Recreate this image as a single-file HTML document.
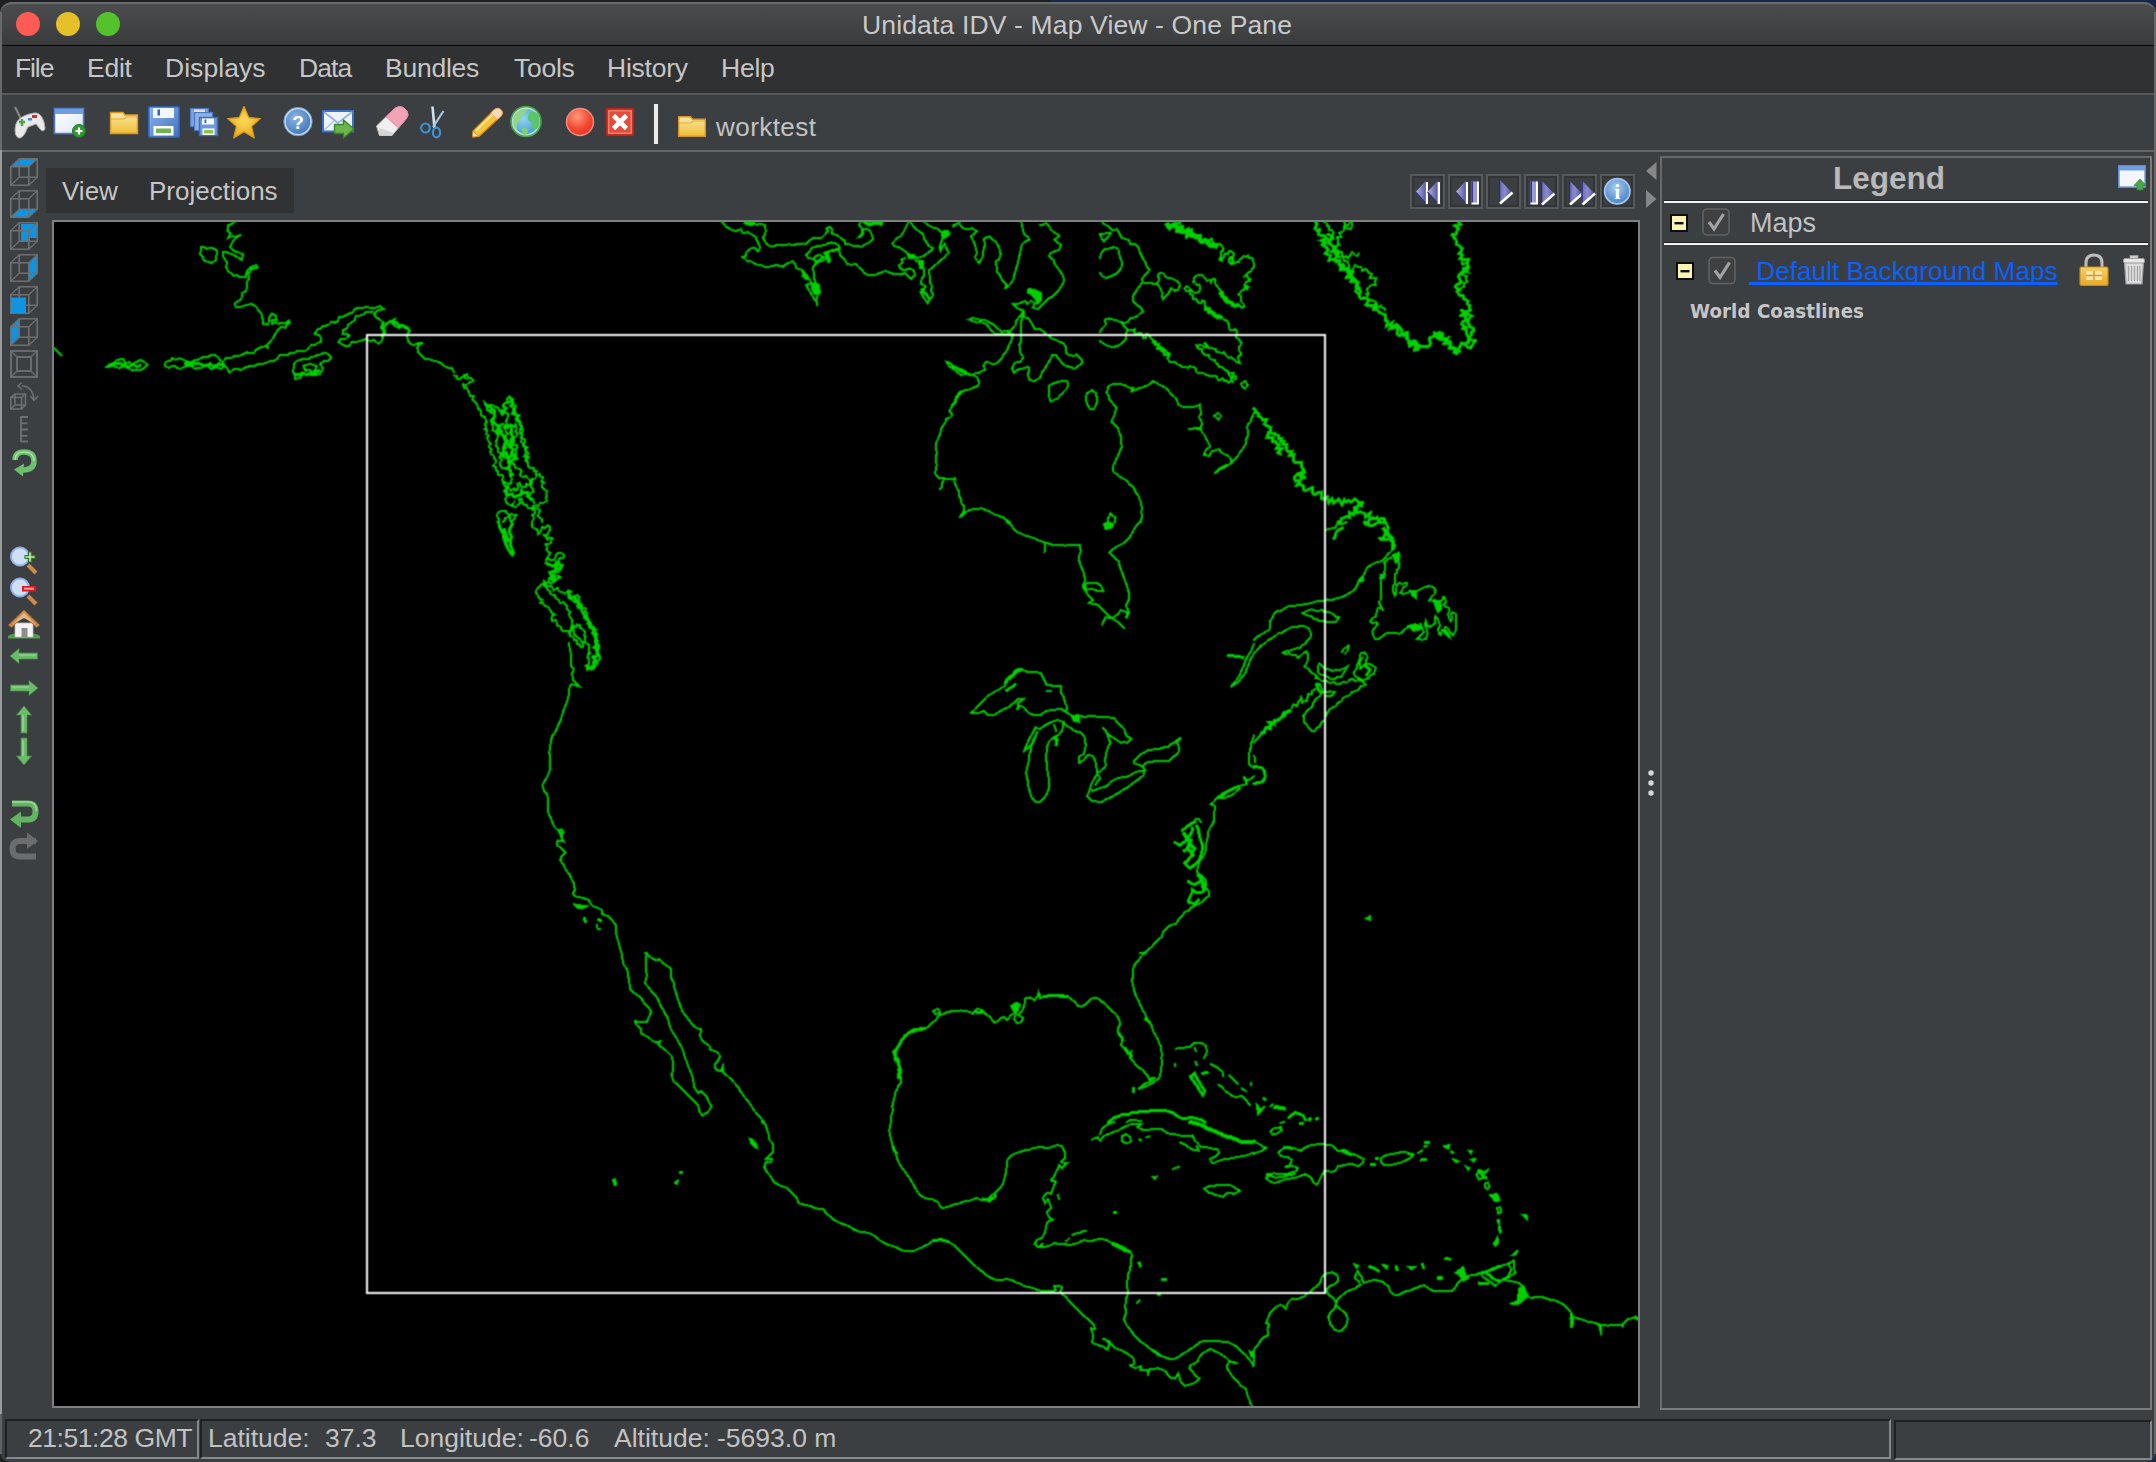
<!DOCTYPE html>
<html lang="en">
<head>
<meta charset="utf-8">
<title>Unidata IDV - Map View - One Pane</title>
<style>
*{box-sizing:border-box;margin:0;padding:0}
html,body{width:2156px;height:1462px;overflow:hidden;background:linear-gradient(90deg,#1f2022 0,#1f2022 1050px,#14284b 1050px,#14284b 100%)}
body{position:relative;font-family:"Liberation Sans",sans-serif;color:#c4c4c4;font-size:26px}
.abs{position:absolute}
.t{position:absolute;white-space:nowrap;line-height:1;transform-origin:0 0}
#win{position:absolute;left:0;top:2px;width:2156px;height:1460px;background:#3c3f41;border-radius:12px 12px 10px 10px}
#titlebar{position:absolute;left:0;top:2px;width:2156px;height:43px;background:linear-gradient(#4b4c4e,#3a3b3d);border-top:2px solid #6b6c6e;border-radius:12px 12px 0 0}
#tbline{position:absolute;left:0;top:45px;width:2156px;height:1px;background:#060607}
#menubar{position:absolute;left:0;top:46px;width:2156px;height:47px;background:#2f3133}
.hl{position:absolute;left:0;width:2156px;height:2px;background:#58595b}
.tl{position:absolute;width:24px;height:24px;border-radius:50%;top:12px}
#lborder{position:absolute;left:0;top:12px;width:2px;height:1442px;background:linear-gradient(#68696b 0,#68696b 138px,#9a9b9c 138px,#9a9b9c 1402px,#606264 1402px,#606264 100%)}
#rborder{position:absolute;left:2154px;top:12px;width:2px;height:1442px;background:#67686a}
.ico{position:absolute;display:block}
svg{overflow:visible}
.m{top:55px;font-size:26.5px;color:#c6c6c6;letter-spacing:-0.25px}

.sb{position:absolute;top:1419px;height:40px;border:2px solid;border-color:#1f2022 #838a8d #838a8d #1f2022}

.st{top:1425px;font-size:26.500px;color:#c2c2c2}
</style>
</head>
<body>
<div id="win"></div>
<div id="titlebar"></div>
<div id="tbline"></div>
<div id="menubar"></div>
<div class="hl" style="top:93px"></div>
<div class="hl" style="top:150px;background:#646668"></div>
<div id="lborder"></div>
<div id="rborder"></div>
<div class="tl" style="left:16px;background:#fe5b54"></div>
<div class="tl" style="left:56px;background:#e6c02a"></div>
<div class="tl" style="left:96px;background:#54c22c"></div>
<div class="t" id="title" style="left:862px;top:12px;font-size:26.5px;letter-spacing:0.15px;color:#c9c9c9">Unidata IDV - Map View - One Pane</div>
<div class="t m" id="m1" style="left:15px;letter-spacing:-1.1px">File</div>
<div class="t m" id="m2" style="left:87px">Edit</div>
<div class="t m" id="m3" style="left:165px;letter-spacing:0.05px">Displays</div>
<div class="t m" id="m4" style="left:299px;letter-spacing:-0.95px">Data</div>
<div class="t m" id="m5" style="left:385px">Bundles</div>
<div class="t m" id="m6" style="left:514px">Tools</div>
<div class="t m" id="m7" style="left:607px">History</div>
<div class="t m" id="m8" style="left:721px">Help</div>
<svg class="ico" style="left:0;top:94px" width="860" height="56" viewBox="0 94 860 56">
<defs>
<linearGradient id="gFold" x1="0" y1="0" x2="0" y2="1"><stop offset="0" stop-color="#fbe9a6"/><stop offset="1" stop-color="#edbd35"/></linearGradient>
<linearGradient id="gBlue" x1="0" y1="0" x2="1" y2="1"><stop offset="0" stop-color="#8fb3e6"/><stop offset="1" stop-color="#3f71c2"/></linearGradient>
<linearGradient id="gWin" x1="0" y1="0" x2="1" y2="1"><stop offset="0" stop-color="#ffffff"/><stop offset="1" stop-color="#dfe6f5"/></linearGradient>
<radialGradient id="gStar" cx="0.5" cy="0.45" r="0.6"><stop offset="0" stop-color="#fbdc5a"/><stop offset="1" stop-color="#e5a315"/></radialGradient>
<radialGradient id="gHelp" cx="0.4" cy="0.35" r="0.7"><stop offset="0" stop-color="#8cb6e2"/><stop offset="1" stop-color="#3f74b8"/></radialGradient>
<radialGradient id="gRed" cx="0.4" cy="0.3" r="0.8"><stop offset="0" stop-color="#ff9a80"/><stop offset="0.6" stop-color="#f4432c"/><stop offset="1" stop-color="#d9382a"/></radialGradient>
<radialGradient id="gGlobe" cx="0.4" cy="0.4" r="0.7"><stop offset="0" stop-color="#8fd6f0"/><stop offset="1" stop-color="#3a8fd0"/></radialGradient>
</defs>
<!-- gamepad -->
<g>
<path d="M15 107 L21 119" stroke="#8a8a8a" stroke-width="2" fill="none"/>
<path d="M16 124 C18 117 28 114 34 113 C40 112 44 118 45 128 C45 131 42 132 40 129 L36 124 L28 127 C26 131 24 137 20 138 C15 138 14 130 16 124 Z" fill="#e9e9e9" stroke="#a9a9a9" stroke-width="1"/>
<path d="M19 122 h6 M22 119 v7" stroke="#4da24a" stroke-width="2.4" fill="none"/>
<rect x="32" y="115" width="5" height="3" fill="#e02b2b"/>
<rect x="28" y="118" width="4" height="2.5" fill="#3c8eea"/>
</g>
<!-- new window -->
<g>
<rect x="54.5" y="108.500" width="29" height="25" fill="url(#gWin)" stroke="#4f80c8" stroke-width="1.6"/>
<rect x="55" y="109" width="28" height="5" fill="#6f9ee0"/>
<circle cx="79" cy="131" r="6.5" fill="#2f9a2f" stroke="#1f7a1f" stroke-width="1"/>
<path d="M75.500 131 h7 M79 127.500 v7" stroke="#fff" stroke-width="2.200"/>
</g>
<!-- folder -->
<g>
<path d="M110.500 133.500 V112.500 H123 L125 115 H137.500 V133.500 Z" fill="url(#gFold)" stroke="#d9962a" stroke-width="1.4"/>
<path d="M111 119 H124 L126 117 H137" stroke="#e5ac3a" stroke-width="1.2" fill="none"/>
</g>
<!-- save -->
<g>
<rect x="148.700" y="106.700" width="30.600" height="30.600" rx="1.500" fill="url(#gBlue)" stroke="#2f62b4" stroke-width="1.6"/>
<rect x="153" y="108" width="21" height="10" fill="#f1f5fc"/>
<rect x="157.500" y="109.500" width="2.500" height="6" fill="#3565b5"/>
<rect x="153.500" y="126" width="20" height="9.500" fill="#fff"/>
<rect x="156" y="128.500" width="15" height="4.500" fill="#6db34f"/>
</g>
<!-- save copies -->
<g>
<rect x="190.500" y="108.500" width="18" height="18" fill="#7fa3da" stroke="#4a78c4" stroke-width="1.2"/>
<rect x="194.500" y="112.500" width="18" height="18" fill="#8fb0e2" stroke="#4a78c4" stroke-width="1.2"/>
<rect x="199.500" y="117.500" width="18" height="18" fill="#6f99dc" stroke="#3a6cc0" stroke-width="1.4"/>
<rect x="194" y="109.500" width="11" height="2.500" fill="#e7ddd0"/>
<rect x="202" y="118.500" width="12" height="6" fill="#f5f8fd"/>
<rect x="204.500" y="119.500" width="1.800" height="3.500" fill="#3565b5"/>
<rect x="202.500" y="128.500" width="12" height="6.500" fill="#fff"/>
<rect x="204" y="130" width="9" height="3.500" fill="#8cc63f"/>
</g>
<!-- star -->
<path d="M244 106.500 L248.800 117.600 L260.300 118.600 L251.600 126.400 L254.300 138 L244 131.800 L233.700 138 L236.400 126.400 L227.700 118.600 L239.200 117.600 Z" fill="url(#gStar)" stroke="#d99a1a" stroke-width="1.2" stroke-linejoin="round"/>
<!-- help -->
<g>
<circle cx="298" cy="121.600" r="13.300" fill="url(#gHelp)" stroke="#c7dcf3" stroke-width="2"/>
<circle cx="298" cy="121.600" r="14.200" fill="none" stroke="#5b8bc8" stroke-width="0.8"/>
<text x="298" y="128.500" font-family="Liberation Sans, sans-serif" font-weight="bold" font-size="19" fill="#ffffff" text-anchor="middle">?</text>
</g>
<!-- mail -->
<g>
<rect x="323" y="111" width="30" height="20.500" fill="#eef3fd" stroke="#3b6fc8" stroke-width="2"/>
<path d="M324 112 L338 123 L352 112" stroke="#8fb0e6" stroke-width="1.600" fill="none"/>
<path d="M324 130 L334 121 M352 130 L342 121" stroke="#a9c1ea" stroke-width="1.200" fill="none"/>
<path d="M334.500 124.500 H343.500 V120 L354 129 L343.500 138 V133.500 H334.500 Z" fill="#6db54a" stroke="#2f8a1f" stroke-width="1.300" stroke-linejoin="round"/>
</g>
<!-- eraser -->
<g>
<path d="M376.500 126 L393 110 Q398.500 104.500 404 108 L407 111 Q409.500 115 406 119 L392 135.500 H379.500 Z" fill="#efefef" stroke="#bdbdbd" stroke-width="1"/>
<path d="M386 116.800 L393 110 Q398.500 104.500 404 108 L407 111 Q409.500 115 406 119 L398.500 127.800 Z" fill="#f2a3b5" stroke="#e58aa0" stroke-width="1"/>
<path d="M379 128 L379.500 135.500 H392 L394 133" fill="#d5d5d5" stroke="none"/>
</g>
<!-- scissors -->
<g fill="none">
<path d="M432.500 106.500 L434.500 128" stroke="#cfe1f3" stroke-width="2.600"/>
<path d="M443.500 111 L433 127" stroke="#a9c9e8" stroke-width="2.200"/>
<ellipse cx="425.500" cy="128" rx="4.300" ry="4.500" stroke="#3d8fd6" stroke-width="2.200"/>
<ellipse cx="436.500" cy="132.500" rx="3.600" ry="4.800" stroke="#3d8fd6" stroke-width="2.200"/>
</g>
<!-- pencil -->
<g>
<path d="M473 131 L494 110 Q498 106.500 501 110 Q504 113 500.500 116.500 L479 136.500 L472.500 137 Z" fill="#f6c33c" stroke="#c98514" stroke-width="1.200" stroke-linejoin="round"/>
<path d="M476 130.500 L495.500 111.500" stroke="#fbe08a" stroke-width="2.400"/>
<path d="M494 110 Q498 106.500 501 110 Q504 113 500.500 116.500 L497 119.500 L491 113 Z" fill="#f7d9b8" stroke="#e2a46a" stroke-width="0.800"/>
<path d="M473 131 L479 136.500 L472.500 137 Z" fill="#f7d9b8" stroke="#c98514" stroke-width="0.800"/>
</g>
<!-- globe -->
<g>
<circle cx="526" cy="121.500" r="15" fill="url(#gGlobe)" stroke="#4aa24a" stroke-width="1.600"/>
<circle cx="526" cy="121.500" r="13.300" fill="none" stroke="#c8ecc0" stroke-width="1.600" opacity="0.85"/>
<path d="M516 113 Q521 108 528 109 Q526 113 522 115 Q523 119 519 121 Q516 124 517 130 Q512 125 513 119 Q514 115 516 113 Z" fill="#8fd68a"/>
<path d="M530 112 Q536 110 539 116 Q541 122 538 128 Q534 131 532 127 Q533 122 529 121 Q526 118 530 112 Z" fill="#5cc46a"/>
<path d="M522 128 Q526 126 528 131 Q527 135 524 135 Q521 132 522 128 Z" fill="#7fd07a"/>
</g>
<!-- record -->
<circle cx="580" cy="122" r="13.500" fill="url(#gRed)" stroke="#ef8d84" stroke-width="1.400"/>
<!-- red x -->
<g>
<rect x="606.800" y="108.800" width="26.400" height="26.400" fill="#e34b3c" stroke="#b8261c" stroke-width="1.800"/>
<rect x="608.800" y="110.800" width="22.400" height="22.400" fill="none" stroke="#f08a7c" stroke-width="1.200"/>
<path d="M613.500 115.500 L626.500 128.500 M626.500 115.500 L613.500 128.500" stroke="#ffffff" stroke-width="4.600"/>
</g>
<!-- separator -->
<rect x="654" y="104" width="4" height="40" fill="#ececec"/>
<!-- folder 2 -->
<g>
<path d="M678.700 136.300 V116.700 H690.500 L692.500 119.200 H705.300 V136.300 Z" fill="url(#gFold)" stroke="#d9962a" stroke-width="1.400"/>
<path d="M679 123 H691 L693 121 H705" stroke="#e5ac3a" stroke-width="1.200" fill="none"/>
</g>
</svg>
<div class="t" id="worktest" style="left:716px;top:114px;font-size:26px;letter-spacing:0.45px;color:#c2c2c2">worktest</div>
<svg class="ico" style="left:0;top:152px" width="52" height="720" viewBox="0 152 52 720">
<defs>
<g id="cube" fill="none" stroke="#6d6f71" stroke-width="1.6">
<path d="M0.800 8.800 H18.800 V27.200 H0.800 Z"/>
<path d="M9.200 0.800 H27.200 V19.200 H9.200 Z"/>
<path stroke-width="1.200" d="M0.800 8.800 L9.200 0.800 M18.800 8.800 L27.200 0.800 M0.800 27.200 L9.200 19.200 M18.800 27.200 L27.200 19.200"/>
</g>
</defs>
<!-- top -->
<g transform="translate(10,158)"><path d="M0.800 8.800 L9.200 0.800 H27.200 L18.800 8.800 Z" fill="#1093e0"/><use href="#cube"/></g>
<!-- bottom -->
<g transform="translate(10,190)"><path d="M0.800 27.200 L9.200 19.200 H27.200 L18.800 27.200 Z" fill="#1093e0"/><use href="#cube"/></g>
<!-- back -->
<g transform="translate(10,222)"><path d="M11 2 H27.200 V16 H20 V19.200 H11 Z" fill="#1093e0"/><use href="#cube"/></g>
<!-- right -->
<g transform="translate(10,254)"><path d="M18.800 8.800 L27.200 0.800 V19.200 L18.800 27.200 Z" fill="#1093e0"/><use href="#cube"/></g>
<!-- front -->
<g transform="translate(10,286)"><use href="#cube"/><path d="M0.800 11.500 H16 V27.200 H0.800 Z" fill="#1093e0"/></g>
<!-- left -->
<g transform="translate(10,318)"><path d="M0.800 8.800 L9.200 0.800 V19.200 L0.800 27.200 Z" fill="#1093e0"/><use href="#cube"/></g>
<!-- square -->
<g transform="translate(10,350)" fill="none" stroke="#6d6f71" stroke-width="1.800"><rect x="1" y="1" width="26" height="26"/><rect x="7" y="7" width="14" height="14"/><path d="M1 1 L7 7 M27 1 L21 7 M1 27 L7 21 M27 27 L21 21" stroke-width="1.300"/></g>
<!-- rotate -->
<g transform="translate(10,382)" fill="none" stroke="#6d6f71" stroke-width="1.600">
<path d="M12 4 Q22 4 24 17"/><path d="M12 0.500 L8 4 L12 7.500" /><path d="M20.500 14 L24 18.500 L28 14"/>
<path d="M0.800 15.500 H11.500 V27 H0.800 Z"/><path d="M5 12 H15.500 V23 H5 Z"/><path d="M0.800 15.500 L5 12 M11.500 15.500 L15.500 12 M0.800 27 L5 23 M11.500 27 L15.500 23"/>
</g>
<!-- ruler -->
<g fill="none" stroke="#6d6f71" stroke-width="1.800"><path d="M21 416 V442 M21 417 H28 M21 423.300 H27.500 M21 429.500 H28 M21 435.800 H27.500 M21 441.500 H28"/></g>
<!-- green loop -->
<g>
<path d="M15 460 Q15 452 24 452 Q34 452 34 461 Q34 470 23 470" fill="none" stroke="#6cbf6c" stroke-width="5.500"/>
<path d="M24 463.500 L14 469.500 L23 476.500 Z" fill="#6cbf6c"/>
<path d="M15 460 Q15 452 24 452 Q34 452 34 461" fill="none" stroke="#a7dca7" stroke-width="1.600"/>
</g>
<!-- zoom in -->
<g>
<path d="M28 565 L36 573" stroke="#c98a4a" stroke-width="4" />
<circle cx="20" cy="556.500" r="9" fill="#cfe0f6" stroke="#8fb2e3" stroke-width="2"/>
<rect x="22" y="548" width="14" height="14" fill="#3c3f41" opacity="0"/>
<path d="M24.500 557 h11 M30 551.500 v11" stroke="#2f7a2f" stroke-width="4.200"/>
<path d="M25.500 557 h9 M30 552.500 v9" stroke="#cfe8b0" stroke-width="1.600"/>
</g>
<!-- zoom out -->
<g>
<path d="M28 596 L36 604" stroke="#c98a4a" stroke-width="4" />
<circle cx="20" cy="587.500" r="9" fill="#cfe0f6" stroke="#8fb2e3" stroke-width="2"/>
<rect x="22" y="586" width="14" height="5.500" fill="#e01820"/>
<rect x="24" y="587.700" width="10" height="2" fill="#f7a0a0"/>
</g>
<!-- home -->
<g>
<path d="M8 636 Q24 628 40 636 L40 638.500 L8 638.500 Z" fill="#4ea04e"/>
<path d="M15 623 H33 V637 H15 Z" fill="#f3f3f3" stroke="#bdbdbd" stroke-width="0.800"/>
<path d="M21.500 628 H27.500 V637 H21.500 Z" fill="#8d8d8d"/>
<path d="M8.500 625 L24 610 L39.500 625 L36.500 627.500 L24 615.500 L11.500 627.500 Z" fill="#c98a4a" stroke="#a96b2f" stroke-width="0.800"/>
<path d="M12 624.500 L24 613 L36 624.500 L24 618 Z" fill="#e3b886"/>
</g>
<!-- arrows -->
<g fill="#6cbb6c" stroke="#3f8f3f" stroke-width="0.800">
<path d="M10 656 L19 648.500 V653 H37.500 V659 H19 V663.500 Z"/>
<path d="M38 688 L29 680.500 V685 H10.500 V691 H29 V695.500 Z"/>
<path d="M24 706 L16.500 715 H21 V733 H27 V715 H31.500 Z"/>
<path d="M24 765 L16.500 756 H21 V738 H27 V756 H31.500 Z"/>
</g>
<g fill="none" stroke="#b5e0b0" stroke-width="1.200" opacity="0.800"><path d="M19 655 H36 M12 687 H29 M23 715 V731 M23 740 V756"/></g>
<!-- undo -->
<g>
<path d="M12 803.500 H28 Q35.500 803.500 35.500 811.500 Q35.500 819.500 28 819.500 H20" fill="none" stroke="#62b362" stroke-width="6"/>
<path d="M21 811.500 L10 819.500 L21 828 Z" fill="#62b362"/>
<path d="M12 802 H28 Q36.500 802 36.500 811" fill="none" stroke="#a5d8a0" stroke-width="1.400"/>
</g>
<!-- redo gray -->
<g>
<path d="M36 841 H20 Q12.500 841 12.500 848.500 Q12.500 856.500 20 856.500 H36" fill="none" stroke="#6a6c6e" stroke-width="6"/>
<path d="M27 832.500 L38 841 L27 849 Z" fill="#6a6c6e"/>
</g>
</svg>
<div class="abs" style="left:46px;top:168px;width:248px;height:45px;background:#303234"></div>
<div class="t" id="vw" style="left:62px;top:178px;font-size:26px;color:#c6c6c6">View</div>
<div class="t" id="pj" style="left:149px;top:178px;font-size:26px;color:#c6c6c6">Projections</div>
<div class="abs" id="mapframe" style="left:52px;top:220px;width:1588px;height:1188px;background:#000;border:2px solid #7d7f80"></div>
<!--MAPSTART-->
<svg class="ico" id="mapsvg" style="left:54px;top:222px;overflow:hidden" width="1584" height="1184" viewBox="54 222 1584 1184" shape-rendering="crispEdges">
<clipPath id="mc"><rect x="54" y="222" width="1584" height="1184"/></clipPath>
<filter id="bl" x="54" y="222" width="1584" height="1184" filterUnits="userSpaceOnUse" color-interpolation-filters="sRGB"><feConvolveMatrix order="3" kernelMatrix="1 2 1 2 4 2 1 2 1" divisor="16" edgeMode="none" preserveAlpha="false"/></filter>
<g clip-path="url(#mc)"><g filter="url(#bl)" fill="none" stroke="#00d000" stroke-linejoin="miter" stroke-linecap="square">
<path stroke-width="2" d="M234.6 222 L231.8 224.1 L228.4 225.1 L227.4 230.2 L230.5 233.3 L228 238 L231.6 236.2 L235.6 236.8 L241.2 234.7 L237.6 236.3 L234.6 238.8 L232.1 242.5 L230.1 247.7 L234.2 251.1 L239.7 252.8 L243.2 254.4 L241.8 260 L237.7 257.3 L232.6 254.4 L227.4 252.4 L223.3 252.4 L222.7 255.9 L225.6 260 L227.3 262.9 L226 266.1 L227.1 268.9 L228.4 271.7 L231.3 273.3 L233.6 275.8 L237.1 275.1 L239.7 277.4 L242.8 277 L245.9 276.6 L246.9 271.3 L251 267.2 L256.2 265.1 L257.6 267.6 L252.1 269.2 L248.2 273.7 L249.4 277.8 L247.3 281.5 L247.4 284.8 L246.9 288.1 L245.4 291.6 L241.8 292.8 L242.5 296.5 L240.4 299.6 L237.6 301.6 L234.6 303.1 L235.8 306.6 L241.8 306.6 L246.9 304.9 L252.1 304.1 L256.2 306.6 L258.4 310.7 L261.3 312.7 L262.5 318.5 L263.3 324 L267.4 324.6 L269.2 321.8 L268.7 318.5 L272 313.5 L275.7 315.6 L276.7 319.7 L271.5 320.5 L272 323.8 L275.3 322.4 L278.7 323.8 L281.8 322.6 L285.1 323.4 L289.2 320.5 L289.6 323 L287 325.1 L285.1 327.9 L281.8 326.7 L278.9 328.7 L276.7 331.6 L274.8 334.9 L273.1 338.2 L270.7 341 L266.6 345.1 L268.7 348.4 L265.3 346.1 L261.3 347.2 L256.2 349.7 L253.9 352.9 L250 353.3 L246.8 352.3 L243.8 353.8 L240.9 355.2 L238 356.4 L234.6 355.8 L230.8 358.2 L226.4 357.9 L222.7 362.0 M222.7 362 L220 360.2 L218.2 357.5 L215 355.1 L211 355 L208.2 356.9 L204.8 356.6 L201.1 358 L197.7 359.9 L194.4 360.5 L191.5 362 L188.3 361.8 L185.3 360.7 L182.3 359.3 L179.2 358.3 L175.6 359.8 L172 358.3 L169.7 361.3 L165.9 361.6 L164.8 365.7 L168.9 368.1 L171.7 366.1 L175.1 366.1 L177.4 368.1 L180.4 368.9 L185.3 366.5 L190.5 365.7 L193.2 367.1 L195.6 368.9 L198.6 367.7 L201.8 367.7 L206.3 364.4 L208.5 366.9 L211.2 368.9 L216.1 367.3 L221.3 368.9 L224.8 365.7 L222.7 362.0 M224.8 365.7 L228.4 370.2 L229.5 372.8 L231.9 370.7 L234.6 368.7 L237.8 368.8 L240.8 370.2 L245.9 367.3 L251 365.7 L255.4 365.7 L259.2 363.6 L263.4 363.7 L267.4 362.4 L270.8 360.7 L274.6 360.7 L277.4 358.3 L279.8 355.4 L283.2 354.8 L286.9 355.4 L290 353.3 L293.6 353.5 L296.7 351.2 L300.3 351.3 L305 351.4 L308.5 348.2 L311 345.4 L314.6 345.1 L317.6 343.2 L320.8 341.9 L321.2 338 L318.8 334.9 L314.6 334.1 L317.5 329.1 L320.7 328.9 L322.8 325.7 L326.1 325.7 L329 324.6 L331.5 321.8 L335.4 322.7 L338.2 320.9 L338.9 316.8 L342.3 317.1 L345.4 315.6 L348.7 313.8 L352.3 312.6 L354.7 309.4 L358.3 307.8 L362.4 308.2 L366 306.6 L369.5 307.7 L373.1 308.2 L376.8 307.4 L380.3 306.1 L383.6 309 L380.6 309.8 L377.4 310.3 L374.2 313.5 L375.3 316.8 L378.3 318.5 L382.4 321.7 L385.2 323.7 L388.5 322.6 L391.6 320.8 L394.7 319.3 L392.6 323.8 L395.4 326.3 L398.8 327.9 L402.7 325.7 L407 326.7 L410.1 330.8 L407.9 333.1 L407 336.1 L408.2 341 L410.4 343.5 L413.2 345.1 L418.5 343.1 L423.4 343.1 L419.2 344.2 L417.3 348 L418.3 352.3 L421.4 355.4 L425.5 359.5 L429.7 359.4 L433.7 360.7 L437.9 361.8 L441.9 363.6 L444.6 366.2 L448 367.7 L452 368.4 L454 371.8 M373.1 311.5 L369.6 312 L366 312.3 L362.9 314.5 L359.5 315.8 L355.7 315.6 L355 319.9 L351.6 322.6 L348.2 324.3 L347 328.5 L343.4 330 L342.4 334.1 L346.1 333.8 L349.5 335.3 L345.4 339 L340.5 339 L338.5 342.3 L342.1 344 L345.4 346.4 L349.3 346.2 L351.7 342.2 L355.7 342.3 L359.1 341 L362.6 340.2 L366 339 L369.9 341 L374.2 340.2 L378.3 343.5 L381.2 342 L382.4 339 L384.4 334.1 L385.2 330.8 L383.4 327.9 L386.9 324.6 M294.1 363.6 L296.6 360.8 L300.3 359.9 L304.3 358.5 L308.5 359.1 L310.8 357 L313.9 356.6 L316.7 355.4 L320.9 354.3 L324.9 352.5 L328.5 354.3 L331.1 357.5 L328.8 360.7 L324.9 360.7 L320 363.6 L322.9 368.1 L321.7 371.1 L320 373.9 L316.4 375 L312.6 375.1 L309.6 374.3 L306.4 373.9 L302.5 374.6 L300.3 378 L295.1 378.8 L294.8 375.1 L293.1 371.8 L293.7 367.7 L294.1 363.6 M303.4 365.7 L307.1 365 L310.5 363.6 L313.4 365.2 L316.7 365.7 L316 369.6 L312.6 371.8 L309.2 369.9 L305.4 370.8 L303.4 365.7 M200.7 246.6 L203.9 247.3 L206.9 248.7 L210 248.1 L213.1 248.3 L216.2 249.6 L217.2 252.8 L216.2 256.3 L216.1 260 L212 263 L206.9 261.4 L203.7 260.2 L202.8 256.9 L200.3 254.3 L200.7 250.7 L200.7 246.6 M106.3 367.3 L109.4 364.3 L113.5 363.2 L116 360.5 L119.4 359.5 L122.8 358.5 L125.8 363.6 L129 362.2 L132 364 L137.1 361.6 L140.8 360 L144.3 362 L147.4 364.6 L143.3 368.7 L139.8 370.3 L136.1 369.4 L132.9 370.6 L129.9 368.9 L126.6 367.7 L123.8 365.7 L119.9 368 L115.6 366.9 L112.4 365.7 L109.4 366.8 L106.3 367.3 M54 348.2 L58.1 352.3 L61.8 355.4 M454 375.5 L456.7 375.6 L457.3 379.3 L460.2 379 L462.4 376.8 L465.3 378 L464.1 374.9 L467.3 374.3 L467.8 377.9 L471.4 378 L473.5 381.1 L470.9 381.9 L468.4 383.1 L466.2 385.4 L463.2 384.1 L463.5 386.2 L464.3 388.2 L467.5 387.7 L467.6 391.1 L469.4 392.3 L469.7 396.2 L473.5 396.4 L472.4 399.1 L473.9 400.9 L475.5 402.6 L477.4 404.3 L477.6 406.5 L477.6 408.8 L480.5 409.8 L480.7 412.9 L481.7 415.9 L484.8 417 L485.7 419.6 L486.8 422.1 L484.8 424.1 L486.3 427.1 L484.8 429.3 L487.4 430.5 L486.2 434.3 L488.9 435.4 L487 438.1 L488.1 440 L488.9 442 L490.9 443.7 L489 445.5 L489.2 447.6 L491.6 450 L489.9 451.9 L491.2 454 L493.3 455.5 L494 458 L496.2 460.4 L495.9 462.4 L494.4 464.3 L493 466.2 L495.6 467.1 L495.7 470.4 L498.1 471.4 L498.2 474.7 L501.7 474.6 L503.3 476.5 L502.2 479.6 L503 481.7 L506.3 482.6 L503.5 484.1 L506 486.9 L506.2 489.2 L504.3 490.9 L505.9 492.7 L506.4 494.8 L506.6 496.8 L505.3 499.1 L506.3 502 L508.4 504.2 L511.4 505.7 L513.5 503.2 L513 506 L515.6 507.3 L516.7 505.6 L518.7 504.5 L520.5 503.3 L518.8 499.4 L521.7 499.1 L522.4 501.1 L522.7 503.5 L524.4 504.6 L526.9 505.2 L527.8 507.6 L530.3 507.9 L532 509.3 L532.9 506.1 L536.1 505.2 L538.6 506 L539.9 503 L542.3 503.2 L544.8 502.3 L546.8 501 L545.7 497.5 L547.4 496 L545.9 494.4 L547.3 491.2 L545.3 490 L543.3 488.8 L541.9 486.5 L542 484.4 L544.3 482.6 L541.4 481.6 L543.3 477.4 L540.2 476.5 L539.7 474 L535.9 475.3 L536.7 471.3 L534 471.4 L533.9 468 L531.1 468 L528.9 467.3 L527.6 465.1 L528.1 462.6 L525.5 460.7 L526.9 458 L524 456.4 L528.6 453.5 L526.6 451.7 L525.6 449.8 L527.4 447.4 L524.8 445.7 L523.9 443.8 L525.4 441 L524.6 439.1 L520.9 437.9 L521.7 435.4 L520.3 433.3 L520.3 431.1 L519.9 428.9 L521.5 426.5 L519.6 424.4 L520.7 422.1 L519.3 420.5 L517 419.3 L519.5 415.5 L515.9 415.1 L515.6 412.9 L514.7 410.9 L514.8 408.6 L515.7 406.1 L512.7 404.8 L512.5 402.6 L513.4 399.6 L510.4 398.5 L509.4 396.4 L508 398 L506.9 399.7 L507.7 402.9 L504.7 403.2 L503.3 404.7 L504.7 406.9 L505.4 409 L501.1 410.7 L504.1 413 L502.2 414.9 L500.6 412.4 L499.2 409.8 L497.8 407.3 L495 406.7 L492.6 405.4 L489.9 404.7 L487 404.5 L484.8 402.6 L485.7 405.2 L486.8 407.7 L488.1 410 L489.9 411.8 M486.8 407.7 L487.1 410.3 L491.1 409.5 L490.7 412.6 L493.3 413 L494.5 414.7 L495 417 L493.2 418.7 L494.2 421.1 L493.5 423.1 L492.1 424.9 L493 427.2 L492.5 430.4 L495.8 431.2 L496.3 433.7 L498.1 435.4 L497.7 437.5 L497.2 439.5 L495.9 441.4 L496.7 443.7 L496.1 445.7 L497.2 447.5 L498.6 448.9 L497.9 452 L500.2 452.9 L502.2 453.9 L499.9 455.6 L499.2 457.6 L502.2 460.3 L500.3 462.1 L500.2 464.2 L501 467.5 L503.3 468.4 L506.3 468.3 L509 469.5 L510.1 471.5 L509.7 474.3 L510.4 476.5 L512.2 479 L510.9 480.9 L511.4 483.1 L507.9 484.5 L508.4 486.8 L509.5 489.1 L511 490.6 L514.7 488.3 L515.6 490.9 L517.6 489.3 L518.4 487.1 L517 483.9 L519.7 482.6 L520.6 485.7 L522.4 487.4 L525.8 486.8 L526.3 484.2 L530.6 485.3 L530.1 481.8 L532 480.6 L532.3 482.6 L530 485 L531 487 L533 488.8 L533.6 491.6 L531.3 493.1 L529.9 494.9 L528.9 497 L530.8 498 L532.7 499.1 L533.5 501 L534 503.2 M503.3 404.7 L502.7 407 L506.8 408.1 L504.7 410.9 L505.9 412.8 L508.6 414.2 L507.6 416.7 L507.4 419 L506.3 421 L506.5 423.1 L508.4 425.6 L503.2 426.7 L505.3 429.3 L506.1 432 L507.3 434.2 L512 432.3 L512.5 435.4 L513 437.8 L513.6 440.2 L509.3 441.2 L511.2 444 L509.4 445.7 L512.2 446.2 L512.2 448.7 L511.4 451.9 L513 453.3 L515.6 453.9 L516 456.6 L515.8 459.1 L511.2 460.2 L512.5 463.1 L513.9 465.1 L515.2 467.3 L517.6 468.3 L520.6 469.4 L521.7 471.4 L519.8 474.9 L521.7 476.5 L523.9 476.8 L526.5 475.7 L527.9 478.5 L530.2 480.5 L532.1 478.7 L534.2 479.3 L536.1 477.5 M509.4 397.5 L512.1 398.8 L508.8 401.9 L513.3 402.7 L509.8 405.8 L512.4 407.2 L513.6 409 L513.1 411.3 L511.8 413.8 L515.6 414.8 L516.9 416.5 L515.6 419 L516.8 420.8 L519.4 421.6 L519.7 424.2 L522 426.1 L522 428.3 L522.9 430.4 L522.4 432.7 L522.1 435 L522.4 437.2 L521.7 439.5 L520.8 441.9 L523.7 443.4 L523 445.7 L525.1 447.4 L524.7 449.6 L526.8 451.3 L524.8 453.9 L526.8 455.5 L528.7 457.1 L526 460.5 L527.9 462.1 M498.1 429.3 L500 427.8 L500.4 424.7 L503.3 424.2 L505.4 425.1 L506.3 428.2 L509.4 427.2 L510.5 424.4 L514.3 426.7 L515.6 424.2 L516.4 426.4 L516.6 428.8 L515.4 431.5 L517.6 433.4 L516.7 435.8 L514.9 437.5 L513.5 439.5 L513.7 442 L513.3 444.8 L517.3 445.3 L517.6 447.8 L515.5 449.5 L515.7 451.7 L515.7 453.8 L516.5 456.1 L515.6 458 L513 456.5 L511.5 453.9 L510.7 457.2 L508.4 458.3 L505.3 458 L502.6 456.5 L505.5 453.6 L502.5 452.2 L503.3 449.8 L503.2 446.8 L504.2 444.5 L507.4 443.7 L507.5 440.6 L506.2 438.5 L503.3 437.5 L502.7 435 L499.7 434 L498.3 432 L498.1 429.3 M498.1 522.1 L499.5 520.1 L497.6 517.5 L497 515.2 L497.9 513.2 L500.2 511.4 L502.8 511.4 L505.5 510.8 L507.4 513.4 L509.2 515.4 L511.4 514.1 L513.5 514.7 L515.5 514.9 L517.6 514.5 L515.5 515.6 L514.9 517.9 L513.5 519.6 L510.6 521.4 L509.9 516.8 L507.4 517.5 L505 518.2 L504.6 520.5 L503.3 522.1 M532 522.1 L532.9 520 L534.3 518 L532.2 514.8 L535.1 513.4 L535.1 510.8 L533 509.3 L534.8 507.6 L537.1 508.3 L539.8 510.1 L539.3 512.7 L537.5 515.5 L539.2 517.5 L542 518.9 L542.3 522.1 M953.5 225.1 L958.7 223 L961.4 226.4 L964.8 229.2 L968.5 229.5 L972 228.2 L977.1 231.2 L974.1 233.8 L971 236.4 L972.5 239 L973.8 241.8 L975.1 244.6 L975.8 248.8 L977.1 252.8 L975.1 256.9 L976.7 260.2 L979.2 263 L980.7 260.4 L982.2 257.7 L983.3 254.8 L983.2 251.3 L984 247.9 L985.3 244.6 L984.4 241.6 L984.3 238.4 L989.5 236.4 L992.3 239.3 L995.6 241.5 L998.7 246.6 L1000.1 250.6 L1000.7 254.8 L998.7 260 L995.6 261 L995.8 264.4 L997.2 267.7 L996.6 271.3 L999 273.6 L1000.4 276.5 L1001.8 279.5 L1004.1 282.2 L1006.9 284.6 L1004.8 288.7 L1008.1 286.4 L1011 283.6 L1012.8 280.6 L1014.1 277.4 L1014.7 273.2 L1016.1 269.2 L1017.2 265.1 L1018.2 261 L1019.2 256.9 L1020.2 252.8 L1020.7 249.7 L1021.3 246.6 L1022.8 243.6 L1025.4 241.5 L1029.5 239.4 L1027.4 236.4 L1024.3 234.3 L1022.8 230.3 L1022.3 226.1 L1021.3 222.0 M1039.7 225.1 L1043.1 224.9 L1045.9 223 L1049 226.1 L1050.9 229.7 L1054.1 232.3 L1059.2 235.3 L1057.2 238.1 L1054.1 239.4 L1057.2 242.5 L1061.3 244.6 L1059.2 249.7 L1055.2 251.3 L1051 252.8 L1049 255.9 L1051.2 258.4 L1054.1 260 L1054.3 263.3 L1056.2 266.1 L1058.3 268.6 L1060.3 271.3 L1063.3 276.4 L1063.8 280 L1063.3 283.6 L1060.3 287.7 L1058.6 290.6 L1056.2 292.8 L1052.1 296.9 L1048.5 298.3 L1045.9 301 L1041.8 305.1 L1037.7 309.2 L1032.6 307.2 L1035.6 303.1 L1030.5 301 L1027.4 304.1 L1025.4 301 L1020.2 303.1 L1016.7 304.1 L1013.1 304.1 L1017.2 308.2 L1020.2 309.4 L1023.3 310.3 L1022.2 313.3 L1019.9 315.7 L1018.2 318.5 L1016.1 320.8 L1016 324.2 L1014.1 326.7 L1010 330.8 L1005.8 330.7 L1001.8 331.8 L998.7 329.2 L995.6 326.7 L992.9 324 L989.5 322.6 L986.5 320.7 L983.3 319.5 L979.1 319.5 L975.1 318.5 L971.9 318.3 L968.9 319.5 L973 321 L977.1 322.6 L981.4 322.2 L985.3 323.6 L988.6 326.1 L990.5 329.7 L993.1 331.8 L995.6 333.9 L999.7 333.8 L1003.8 333.9 L1006.9 333.5 L1010 333.2 L1013.1 333.9 L1012 339 L1010.7 342.2 L1009 345.1 L1007.7 348.9 L1005.9 352.3 L1003.3 355.1 L1001.8 358.5 L997.7 362.6 L994.7 364 L991.5 363.6 L986.4 361.6 L983.3 365.7 L985.3 369.8 L982.1 370.9 L979.2 372.8 L975.4 373.3 L972 374.9 L968.6 374 L965.9 371.8 L962.6 369.6 L958.7 368.7 L955.8 366.9 L952.5 365.7 L949.8 363 L946.4 361.6 L949.4 366.7 L953.2 368.9 L956.6 371.8 L960.7 374.9 L964.8 374.2 L968.9 373.9 L973.1 375.2 L977.1 377 L979.2 382.1 L978.2 386.2 L974.2 386.9 L971 389.3 L967.9 389.6 L964.8 390.3 L960.7 392.3 L958.9 395.6 L956.6 398.5 L954.7 401.7 L952.5 404.7 L951.3 407.9 L949.4 410.8 L952.5 414.9 L949.9 417.6 L946.4 419 L945.5 422.4 L943.3 425.2 L941.2 429.1 L940.2 433.4 L939 437.1 L937.1 440.6 L935.8 444.1 L936.1 447.8 L936.5 451.2 L936.5 454.6 L936.1 458 L936.1 461.4 L936.7 464.9 L936.1 468.3 L935.1 473.4 L938.1 477.5 L941.3 477.8 L944.3 478.5 L947.7 479.4 L951.1 479.2 L954.6 478.5 L954.5 481.7 L955.6 484.7 L956.9 487.9 L958.7 490.9 L959 495.1 L960.7 499.1 L961.5 503 L963.8 506.2 L963.8 511.4 L961.7 514.4 L959.7 517.5 L963 515.3 L965.9 512.4 L969.1 510.1 L973 509.3 L977.2 509.2 L981.2 508.3 L985.4 509.8 L989.5 511.4 L992 513.2 L994.8 514.3 L997.7 515.5 L1000.6 516.5 L1003.5 517.5 L1005.9 519.6 L1010 522.1 M944.3 478.5 L942.5 482.5 L942.3 486.8 L940.2 488.8 M1023.3 310.3 L1024.5 313.7 L1024.3 317.4 L1028.4 318.5 L1030.5 321.5 L1032.6 324.6 L1034.6 328.7 L1039.7 328.7 L1043 331.1 L1045.9 333.9 L1048.7 335.6 L1051 338 L1056.2 340 L1059.6 341.9 L1063.3 343.1 L1066.4 348.2 L1066.1 351.4 L1067.4 354.4 L1070.7 355 L1073.6 356.4 L1076.7 354.4 L1079 357.1 L1081.8 359.5 L1082.8 362.6 L1078.7 365.7 L1074.6 368.7 L1069.5 366.7 L1066.3 366 L1063.3 364.6 L1061.4 362 L1059.2 359.5 L1056.2 355.4 L1052.1 355.4 L1050.7 358.6 L1049 361.6 L1045.9 366.7 L1044.3 369.6 L1041.8 371.8 L1041.3 375.1 L1039.7 378 L1034.6 381.1 L1029.5 380 L1028.4 376.5 L1028.4 372.8 L1029.2 369.8 L1028.4 366.7 L1025.4 367.7 L1022.3 368.7 L1017.2 369.8 L1014.1 372.8 L1012 368.7 L1014.1 363.6 L1017 362.1 L1020.2 361.6 L1023.3 357.5 L1020.2 352.3 L1020.4 348.6 L1019.2 345.1 L1021.1 341.3 L1021.3 336.9 L1021.2 333.9 L1020.6 330.8 L1020.7 327.7 L1021.3 324.6 L1021.1 321.4 L1022.3 318.5 L1022.5 314.3 L1023.3 310.3 M1049 386.2 L1051.7 384 L1055.1 383.1 L1059.1 381.6 L1063.3 381.1 L1067.4 381.1 L1067.9 384.6 L1067.4 388.2 L1064.8 390.7 L1062.3 393.4 L1059.7 395.5 L1058.2 398.5 L1054.4 399.6 L1051 401.6 L1049 396.4 L1048.8 393 L1048.8 389.6 L1049 386.2 M1086.9 393.4 L1092.1 390.3 L1096.2 393.4 L1096.6 397.5 L1097.2 401.6 L1095.9 405.3 L1094.1 408.8 L1090 408.8 L1086.9 403.6 L1086.1 400.6 L1085.9 397.5 L1086.9 393.4 M1108.5 386.2 L1112.4 384.4 L1116.7 384.1 L1120.9 384.3 L1124.9 385.2 L1128.7 387.5 L1133.1 388.2 L1131.1 392.3 L1133.5 390.4 L1136.5 389.6 L1139.3 388.2 L1142.4 387.4 L1145.4 386.2 L1149.4 384.2 L1152.6 381.1 L1156.5 382.7 L1159.8 385.2 L1163.1 386.3 L1166 388.2 L1168.9 391 L1171.1 394.4 L1173.8 396.3 L1176.2 398.5 L1177.3 401.5 L1178.3 404.7 L1182.2 406.5 L1186.5 406.7 L1190.6 407.3 L1194.7 406.7 L1199.8 404.7 L1199.7 407.8 L1200.8 410.8 L1200.6 414.2 L1198.8 417 L1201.1 420.2 L1201.9 424.2 L1200.8 428.3 L1197.7 428.1 L1194.6 428.1 L1191.6 429.1 L1188.5 429.3 L1191.6 429.3 L1194.7 428.2 L1197.8 428.8 L1200.8 428.9 L1202.2 432.6 L1204.9 435.4 L1206 438.8 L1208 441.6 L1210.1 446.7 L1206 449.8 L1203.9 454.9 L1209.1 456 L1212.1 450.8 L1215.9 450.4 L1219.3 448.8 L1220.7 451.9 L1223.4 453.9 L1226.7 455 L1229.6 457 L1231.3 459.8 L1231.6 463.1 L1228.7 464.8 L1225.5 465.2 L1221.9 467.2 L1218.3 469.3 L1214.2 473.4 L1218 471.1 L1221.4 468.3 L1224.5 467.6 L1227 465.9 L1229.6 464.2 L1232.8 461.3 L1235.7 458 L1238.2 455.6 L1239.8 452.5 L1241.9 449.8 L1244 446.8 L1246 443.7 L1246.2 439.3 L1248 435.4 L1248 431.3 L1247 427.2 L1248 424.3 L1250.4 422.1 L1251.1 419 L1252.8 416.1 L1254 412.9 M1108.5 386.2 L1107.8 389.4 L1106.4 392.3 L1108.6 395.7 L1109.5 399.5 L1111.9 401.8 L1113.6 404.7 L1116.7 407.7 L1115.4 411.3 L1114.6 414.9 L1112.8 418.4 L1111.6 422.1 L1115.7 425.2 L1117.8 427.9 L1118.8 431.3 L1120.5 435.3 L1120.8 439.5 L1121.3 443.1 L1121.8 446.7 L1120.2 450.3 L1118.8 453.9 L1117.4 457.1 L1115.7 460.1 L1114.6 463.4 L1112.6 466.2 L1112.9 469.3 L1113.6 472.4 L1116.7 473.7 L1118.8 476.5 L1121.6 477.5 L1124.3 479.2 L1127 480.6 L1129.5 484.3 L1133.1 486.8 L1134.6 489.6 L1136 492.6 L1138.2 495 L1139.3 498.4 L1140.8 501.7 L1141.3 505.2 L1142.1 508.6 L1141.2 512.1 L1142.4 515.5 L1141.5 518.7 L1141.3 522.1 M1214.2 415.9 L1218.3 412.9 L1221.4 415.9 L1218.3 419.4 L1214.2 415.9 M1240.9 384.1 L1245 381.1 L1248 385.2 L1245 388.6 L1242.7 386.6 L1240.9 384.1 M1107.5 522.1 L1107.7 518.9 L1109.5 516.3 L1110.5 513.4 L1112.9 515.7 L1115.7 517.5 L1114.6 522.1 M1323.8 222 L1326.5 222.6 L1326.7 225.6 L1329.4 226.3 L1329.1 229.8 L1332 230.2 L1333.7 232.7 L1333 234.7 L1332.6 236.7 L1332.8 238.9 L1329.9 240.5 L1328.5 243.8 L1331.5 244.8 L1334.1 246.1 L1334 248.7 L1336.1 249.3 L1335.2 254 L1338.9 252.4 L1341.8 252.1 L1342.3 254.8 L1344.3 257.1 L1346.4 255.9 L1348.4 258.4 L1350.5 254.8 L1352.2 251.7 L1354.5 254.1 L1356.9 256.3 L1358.7 253.8 M1344.3 222 L1345.8 224.9 L1347.7 225.9 L1351.3 220.3 L1352.5 224.1 L1351.8 226.5 L1350.9 228.7 L1348.9 229.5 L1343.9 226.3 L1344.3 230.2 L1342.6 232 L1339.2 232.7 L1341.4 236.8 L1337.1 237.1 L1338.1 240.5 L1338.2 242.6 L1339.2 244.9 L1335.1 246.3 L1333.6 248.2 L1339.2 251.2 L1336.1 252.8 L1337.2 254.9 L1338.8 256.7 L1342.5 256.3 L1343.3 258.7 L1344.3 261 L1347.7 261.7 L1348.6 264 L1349.5 266.2 L1348.6 269.6 L1350.5 271.3 L1353 271.2 L1353.6 267.3 L1355 265 L1358.7 267.2 L1361.4 267.3 L1362.1 270.7 L1366 268.9 L1367.6 270.9 L1368.9 273.3 L1371.9 273.7 L1369.7 277.9 L1372.3 278.4 L1376.4 278 L1375.1 281.5 L1375.6 285.1 L1372.5 285.1 L1370.2 285.9 L1368.9 287.7 L1366.7 289.2 L1368.6 293.4 L1364.8 293.8 L1368.2 294.5 L1366.4 298.7 L1368.9 300 L1371.3 300.4 L1373.7 300.6 L1375.7 301.8 L1377.1 304.1 L1376.8 307.9 L1381.2 305.5 L1381.8 308.2 L1384.3 308.2 L1385.3 310.3 M1459.2 258.9 L1462 258.7 L1461.5 262.7 L1462.4 264.9 L1467.8 261.2 L1467.4 265.1 L1466.2 267 L1464.1 268.5 L1468.1 272.5 L1461.9 272.4 L1463.3 275.4 L1467 275.9 L1465.5 279.9 L1467.4 281.5 L1465.6 282.8 L1463.7 283.9 L1463.8 287.1 L1461.3 287.7 M532 522 L532.6 524.1 L531.6 526.7 L534 528.2 L536.9 529.2 L537.9 531.5 L538.1 534.3 L540.3 532.7 L541.2 530.2 L542.3 527.1 L545.3 528.2 L547.4 525.3 L550.5 527.1 L550.1 530 L548.4 532.3 L547.5 535.3 L544.3 535.3 L546.4 537 L547.4 539.4 L549.7 537.6 L552.5 538.4 L551.1 540.8 L550.5 543.5 L547.8 543.6 L545.3 544.6 L547.2 546.9 L546.4 549.7 L548.1 551.7 L550.5 552.8 L549 555.4 L547.4 557.9 L545.3 561 L547.6 558.8 L550.5 560 L554.1 560.2 L555.6 556.9 L556.5 554.6 L558 552.8 L560.7 552.8 L563.8 554.8 L563.5 557.9 L559.9 557.8 L558.7 560 L558.6 562.8 L560.3 564.2 L562.8 565.1 L561.6 567.9 L559.7 570.2 L557.6 572.3 L554.6 572.3 L553.9 575.7 L550.5 575.4 L552.5 576.1 L554.6 575.7 L556.6 575.4 L559 575.7 L560.7 577.4 L557.8 578.4 L555.6 580.5 L553.2 582.3 L550.5 583.6 L548.4 581.5 L546.4 583.6 L544.3 581.5 L544.9 584.2 L547.4 585.6 L550.4 585.5 L552.5 587.7 L553.7 590.4 L557.6 587.8 L558.7 590.8 L560.7 591.9 L563 592.4 L564.8 593.8 L566.5 592 L568.3 590.5 L571 591.8 L569 593.4 L571.8 596.6 L568.9 597.9 L571.4 599.7 L574.1 601 L577 599.9 L574.6 596.1 L577.1 594.9 L579.5 596.9 L579.2 600 L578 601.9 L577.8 604.1 L577.1 606.1 L579.8 606.3 L582.3 605.1 L582 607.8 L585.7 608.5 L585.3 611.3 L587.2 613.5 L587.4 616.4 L587.2 618.9 L585.3 620.5 L588.7 619.5 L590.5 622.6 L590.5 625.7 L593.6 626.7 L594.1 629.2 L596.6 629.7 L595 631.5 L597.5 634.6 L594.6 635.9 L594.7 639.3 L597.7 641 L596.8 643.3 L598.5 645.1 L598.7 647.2 L596.9 648.9 L597.5 651.4 L596.6 653.3 L599.1 654 L599.7 656.4 L599.8 659.3 L598 660.7 L595.6 661.6 L597.8 663.6 L595.6 665.7 L594.1 668.3 L591.5 669.8 L589.5 668.6 L587.4 669.8 L587.2 667.3 L585.3 665.7 L588.6 664.8 L589.5 661.6 L589.3 659.1 L587.4 657.5 L588 654.7 L590.5 653.3 M544.3 583.6 L541.3 584.4 L539.2 586.6 L537.2 588.4 L536.1 590.8 L536.4 593.6 L538.1 595.9 L539.5 598.6 L542.3 600 L540.2 603.1 L543 602.5 L544.1 605.4 L546.4 606.1 L548.8 607.8 L550.5 610.3 L551.6 613.2 L554.6 614.4 L552 615.6 L551.5 618.5 L552.2 621.1 L556 619.8 L556.6 622.6 L557.6 625.7 L560.7 626.7 L561.4 629.3 L563 630.8 L565.9 630.8 L568.4 631.5 L569.5 633.5 L570 635.9 L573.1 636.9 L574.1 640 L576.9 639.9 L576.6 643.8 L579.2 644.1 L580.5 646.7 L583.3 647.2 L583.1 645 L583.2 642.7 L581.2 641 L579.6 638.6 L577.1 636.9 L575.4 635.3 L573.7 633.5 L574.1 630.8 L572 629.1 L573 626.7 L570.8 628.2 L571.3 631.4 L568.9 632.8 L569.7 630.8 L571.3 629.6 L571.3 627 L574.1 626.7 L572.4 625 L571.7 622.9 L572.6 620.2 L571 618.5 L569.7 616.6 L568.8 614.6 L570.4 611.7 L567.9 610.3 L566.9 608.2 L567.1 605.5 L564.8 604.1 L563 602.3 L559.7 602.9 L558.7 600 L556.9 599 L555.4 597.6 L554.8 595.3 L552.5 594.9 L550.4 593.6 L549.7 590.9 L547.4 589.7 L546.5 587.6 L544.3 586.1 L544.3 583.6 M574.1 627.7 L576.4 626.9 L577.1 624.6 L579.6 625 L580 628.1 L582.3 628.7 L583.9 630.5 L585.1 632.4 L584.3 634.9 L585.7 636.7 L584.6 639.2 L584.5 641.4 L586.4 643.1 L588.7 644.5 L588.5 647.2 L589.5 649.2 L589 651.3 L588.4 653.3 M568.9 643.1 L569.2 646.2 L570 649.2 L570.8 653.3 L571 657.5 L571 661.6 L571 665.7 L574.1 668.7 L572 673.9 L572.7 676.9 L573 680 L575.9 683.3 L579.2 686.2 L575.5 685.4 L572 684.1 L570 686.2 L569 690.2 L568.9 694.4 L568.1 697.9 L567.2 701.3 L565.9 704.7 L564.1 708.7 L562.8 712.9 L561.7 715.9 L561.1 719.1 L559.7 722.1 L558 725.6 L556.6 729.3 L554.9 732.6 L552.5 735.4 L551.2 739.5 L550.5 743.7 L549.8 747.7 L549.4 751.9 L549.7 756 L550.5 760.1 L550.3 764.2 L550.5 768.3 L549.1 772.4 L547.4 776.5 L544.3 781.6 L542.3 785.7 L544.3 790.9 L547.4 795 L547.8 799.1 L548 803.2 L548.1 807.3 L548 811.4 L548.9 814.6 L550.5 817.5 L552.5 822.1 M1006.9 522 L1009.7 523.7 L1012 526.1 L1014.3 529.4 L1017.2 532.3 L1020.9 533.4 L1024.3 535.3 L1027.8 536.1 L1031.3 537.2 L1034.6 538.4 L1037.9 540.2 L1041.4 541.2 L1044.9 542.5 L1049 543.6 L1053.1 545 L1056.1 545.5 L1059.2 545 L1062.3 545.4 L1065.4 545.6 L1068.5 545.3 L1071.6 545.2 L1074.6 544.6 L1079.8 544.6 L1080 547.7 L1080.8 550.7 L1079.6 554.8 L1078.7 558.9 L1079.9 562.5 L1080.8 566.1 L1082.5 569.6 L1083.9 573.3 L1084.7 577.4 L1084.9 581.5 L1082.8 585.6 L1084.1 588.9 L1085.9 591.8 L1087.8 594.4 L1090 596.9 L1093.1 600 L1089 603.1 L1092.5 603.8 L1096.2 604.1 L1099.5 606.4 L1102.3 609.2 L1105.5 612.3 L1108.5 615.4 L1112.6 618.5 L1109 617.7 L1105.4 617.4 L1103.8 621 L1102.3 624.6 M1044.9 543.5 L1045 547.7 L1044.5 551.8 M1112.6 618.5 L1115.7 620.5 L1118.8 622.6 L1121 625.4 L1123.9 627.7 M1112.6 618.5 L1115 616.2 L1117.7 614.4 L1120.8 610.3 L1124 611 L1127 612.3 L1126.6 615.4 L1125.9 618.5 L1127.7 615.5 L1129 612.3 L1127.8 609.1 L1125.9 606.1 L1127.2 602.9 L1129 600 L1128.7 596.4 L1129 592.8 L1127.7 589.3 L1127 585.6 L1125.3 581.6 L1123.9 577.4 L1122.4 573.3 L1120.8 569.2 L1119.4 565.2 L1118.8 561 L1116.1 559.1 L1113.6 556.9 L1109.5 552.8 L1113.6 548.7 L1117.1 546.4 L1120.8 544.6 L1124.1 542.9 L1127 540.5 L1129.7 537 L1132.1 533.3 L1133.8 529.5 L1136.2 526.1 L1140.3 522.0 M1083.9 584.6 L1089 582.5 L1092.6 583 L1096.2 582.5 L1099 584.3 L1101.3 586.6 L1103.4 590.8 L1100.3 590.9 L1097.2 590.8 L1092.1 588.7 L1086.9 589.7 L1083.9 584.6 M971 712.9 L974.1 710.5 L976.7 707.6 L979.2 704.7 L981.7 702.5 L983.8 700 L985.9 697.5 L988.4 695.4 L991.6 693.8 L994.4 691.7 L997.7 690.3 L1001.1 688 L1004.8 686.2 L1005.2 683.1 L1005.9 680 L1008.7 677.1 L1012 674.9 L1014 672.3 L1016.1 669.8 L1021.3 668.7 L1024.2 670.5 L1027.4 671.8 L1031 672.2 L1034.6 672.2 L1037.7 672.5 L1040.8 672.8 L1042.2 676 L1043.8 679 L1045.4 682.1 L1046.9 685.2 L1050.6 685.3 L1054.1 686.2 L1057.7 686.3 L1061.3 686.2 L1061.2 689.3 L1060.9 692.3 L1062.4 695 L1064.4 697.5 L1064.5 700.6 L1065.4 703.6 L1067.4 707.7 L1065.4 711.8 L1061.3 708.8 L1057.7 709.3 L1054.1 709.8 L1050.5 710.2 L1046.9 710.8 L1043.7 712.7 L1040.8 714.9 L1037.2 715 L1033.6 714.9 L1028.4 712.9 L1026.2 710.5 L1024.3 707.7 L1020.2 705.7 L1017.2 709.8 L1017.9 706.2 L1018.2 702.6 L1021.5 700.9 L1024.3 698.5 L1019.2 698.5 L1016.5 700.3 L1014.1 702.6 L1010.9 705 L1007.9 707.7 L1004.2 709 L1000.7 710.8 L997.6 712.7 L994.6 714.9 L991 714.8 L987.4 714.9 L984.3 710.8 L979.2 712.9 L975.1 712.9 L971 712.9 M1046.9 690.7 L1051 690.7 M1063.3 722.1 L1060.3 720.9 L1057.2 720.1 L1054.1 721 L1051 722.1 L1048.1 723.9 L1044.9 725.2 L1042.3 727.3 L1039.7 729.3 L1035.6 727.2 L1034.1 730.3 L1032.6 733.4 L1030.4 736.9 L1028.4 740.6 L1027 744.2 L1025.4 747.8 L1024.3 750.8 L1027.5 748.4 L1030.5 745.7 L1032.3 743.2 L1033 740.1 L1034.6 737.5 L1036.3 734.5 L1037.7 731.3 L1036.1 734.3 L1035.2 737.5 L1033.8 740.6 L1032.6 743.7 L1031.1 746.9 L1030.9 750.6 L1029.5 753.9 L1029 757.3 L1028.9 760.8 L1028 764.2 L1027.2 767.6 L1026.5 770.9 L1026.4 774.4 L1026.9 777.5 L1027.8 780.5 L1027.9 783.7 L1028.4 786.8 L1029.4 790.2 L1030.3 793.7 L1031.5 797 L1033.6 799.6 L1035.6 802.1 L1039.7 802.1 L1042.4 799.7 L1044.9 797 L1046.5 794.4 L1047.6 791.5 L1049 788.8 L1048.9 785.4 L1049.4 782 L1049 778.5 L1048 775.2 L1047.8 771.7 L1046.9 768.3 L1046.5 764.9 L1046.5 761.4 L1045.9 758 L1045.9 754.6 L1047.1 751.2 L1046.9 747.8 L1047.8 744.6 L1049 741.6 L1051.3 739.2 L1054.1 737.5 L1059.2 734.4 L1062.3 730.3 L1063.3 725.2 L1063.3 722.1 M1054.1 725.2 L1055.3 728.2 L1056.2 731.3 M1067.4 712.9 L1070.6 714.8 L1073.6 717 L1077.7 715.9 L1080.9 716 L1083.9 717 L1086.9 716.5 L1090 716.2 L1093.1 715.9 L1096.2 716.5 L1099.3 716.5 L1102.3 717 L1105.4 717 L1108.5 717.2 L1111.5 718 L1114.6 718 L1116.3 721.3 L1118.8 724.2 L1121.3 726.2 L1123.9 728.3 L1125.2 731.8 L1125.9 735.4 L1131.1 738.5 L1127 742.6 L1123.9 742.3 L1120.8 742.6 L1117.7 740.7 L1114.6 738.5 L1109.5 735.4 L1107.2 733.1 L1105.4 730.3 L1102.3 727.2 L1105.2 730.6 L1107.5 734.4 L1108.7 738.6 L1110.5 742.6 L1108.7 745.6 L1107.5 748.8 L1106.6 751.8 L1106.1 754.9 L1105.4 758 L1105.3 761.1 L1105.7 764.2 L1105.4 767.3 L1102.6 768.9 L1100.3 771.4 L1097.2 772.4 L1096.5 768.3 L1096.2 764.2 L1094.8 760 L1093.1 756 L1088 754.9 L1085.7 757.3 L1083.9 760.1 L1078.7 763.1 L1079 760.1 L1078.7 757 L1083.9 753.9 L1084.9 749.8 L1085.9 745.7 L1085.2 741.6 L1084.9 737.5 L1082.9 734.9 L1080.8 732.4 L1077.1 731.7 L1073.6 730.3 L1070.7 728 L1067.4 726.2 L1063.3 722.1 M1097.2 773.4 L1095.3 777.1 L1093.1 780.6 L1091.2 784.6 L1090 788.8 L1088.7 792.5 L1086.9 796 L1089.6 798.5 L1092.1 801.1 L1095.2 801.2 L1098.2 801.7 L1101.3 802.1 L1103.9 800.5 L1106.6 799 L1109.5 798 L1112.7 796.5 L1115.6 794.4 L1118.8 792.9 L1121.4 791 L1124.1 789.3 L1127 787.8 L1129.7 785.7 L1132.4 783.6 L1135.2 781.6 L1138 779.7 L1140.7 777.6 L1143.4 775.5 L1144.4 770.3 L1141.3 771 L1138.2 771.4 L1135.3 772.3 L1132.6 773.8 L1130 775.5 L1127.1 776.6 L1123.8 776.5 L1120.8 777.5 L1116.6 778.7 L1112.6 780.6 L1110 782.4 L1108 785 L1105.4 786.8 L1101.7 787.5 L1098.2 788.8 L1093.1 790.9 L1090 788.8 M1097.2 773.4 L1100.3 778.5 L1097.6 781.5 L1095.1 784.7 M1134.1 761.1 L1136.2 758.4 L1138.6 756 L1141.3 753.9 L1145.1 752.3 L1148.5 749.8 L1152.3 749.6 L1156 748.9 L1159.8 748.8 L1163.8 747.4 L1168 746.7 L1170.9 744.4 L1174.2 742.6 L1177.6 739.8 L1181.3 737.5 L1179.1 739.9 L1177.2 742.6 L1179.3 747.8 L1178.3 752.9 L1175.8 755.1 L1173.1 757 L1169 761.1 L1165.6 761.4 L1162.2 760.7 L1158.8 761.1 L1155 761.1 L1151.3 762.1 L1147.5 762.1 L1144.7 763.9 L1142.4 766.2 L1138.3 764.6 L1134.1 763.1 L1134.1 761.1 M1142.4 766.2 L1145.4 770.3 M1254 644.1 L1252.3 647.6 L1251.1 651.3 L1248.9 654.3 L1247 657.5 L1245.1 661.4 L1243.9 665.7 L1242.3 668.6 L1240.9 671.7 L1239.8 674.9 L1237.5 678.7 L1234.7 682.1 L1232.5 684.5 L1230.6 687.2 L1234.2 684.7 L1237.8 682.1 L1240 679.8 L1241.8 677.3 L1243.9 674.9 L1245.7 672 L1246.7 668.8 L1248 665.7 L1249.4 662 L1251.1 658.5 L1254 653.3 M1254 735.4 L1252.6 739.5 L1251.1 743.7 L1250.9 747.2 L1249.8 750.5 L1249.1 753.9 L1249.4 757.3 L1249.1 760.8 L1249.1 764.2 L1251.5 766.2 L1254 768.3 M1254 776.5 L1251 778.5 L1248 780.6 L1243.9 776.5 L1245.1 780.2 L1247 783.7 L1243.6 785.2 L1239.8 785.7 L1235.6 786.9 L1231.6 788.8 L1228.9 790.2 L1226.1 791.5 L1223.4 792.9 L1220.9 794.8 L1218.4 796.8 L1216.2 799.1 L1213.8 801.7 L1211.1 804.2 L1215.2 806.2 L1214.9 809.3 L1214.1 812.4 L1214.2 815.5 L1214.1 818.8 L1213.2 822.1 M1219.3 798 L1222 796.4 L1224.5 794.6 L1226.7 792.3 L1229.6 790.9 L1232.4 789.6 L1235.1 788.3 L1237.8 786.8 L1239.8 788.8 L1236.5 791 L1233.7 793.9 L1231 795.5 L1228 796.2 L1225.5 798 L1222.4 798 L1219.3 798.0 M1194.7 819.6 L1198.8 818.6 L1200.8 822.1 M1324.8 530.2 L1328.4 529.1 L1332 528.2 L1335.3 527.9 L1336.8 524.2 L1340.2 524.1 L1343.5 523.6 L1346.4 522.0 M1393.6 548.7 L1390.6 551.9 L1387.4 554.8 L1385 558.1 L1382.3 561 L1377.1 562 L1374 563.4 L1371 565.1 L1367.7 567 L1365.9 570.2 L1364.3 574.1 L1361.7 577.4 L1358.8 580.5 L1357.6 584.6 L1355.8 587.8 L1353.5 590.8 L1349.9 592.8 L1346.4 594.9 L1342.5 597 L1338.1 597.9 L1334.5 599.1 L1331 600.4 L1327.7 599.3 L1324.8 601 L1321.7 600.8 L1318.6 600.6 L1315.6 601.6 L1312.2 602.8 L1308.8 603.5 L1305.3 603.7 L1302 605 L1298.4 604.8 L1295 605.7 L1291.5 606.2 L1288 606.5 L1284.8 608.2 L1281.2 611 L1276.6 611.3 L1274 614 L1272.5 617.4 L1270.3 620.7 L1270.4 624.6 L1269.4 629.7 L1265.7 631.7 L1262.2 633.9 L1257.1 636.9 L1254 640.0 M1302.2 613.3 L1307.4 610.7 L1311.5 609.3 L1315.6 610.7 L1318.8 610.6 L1322 610.3 L1324.8 612.3 L1329.1 612.2 L1333 613.9 L1335.5 616.8 L1339.2 617.4 L1336.1 621.5 L1332 621.5 L1327.9 622.2 L1323.8 621.4 L1319.7 621.5 L1317 619.2 L1313.5 618.5 L1311 615.8 L1307.4 615.4 L1302.2 613.3 M1254 653.3 L1256.3 651.2 L1258.4 648.8 L1260.2 646.2 L1263.1 644.4 L1266 642.5 L1268.4 640 L1271.3 638.5 L1274.1 637 L1276.6 634.9 L1278.9 632.7 L1282.3 632.6 L1284.8 630.8 L1288.3 628.8 L1292 627.1 L1295.6 627.5 L1299.2 626.3 L1302.9 625.5 L1306.3 627.1 L1309.1 628.8 L1310.4 631.8 L1311.3 635.6 L1309.4 639 L1306.7 641 L1305.3 644.1 L1302 645.2 L1300.2 648.2 L1297 648.3 L1294 649.2 L1290.5 650.4 L1286.8 650.9 L1282.7 652.9 L1285.7 654.1 L1288.9 653.3 L1292.2 655.2 L1296.1 655.4 L1298.1 657.9 L1300.8 655.7 L1303.3 653.3 L1306.3 651.3 L1307.8 654.2 L1307.8 657.5 L1307.6 660.7 L1306.3 663.6 L1304.3 666.7 L1308.4 668.7 L1311.5 672.8 L1315.6 674.9 L1317.6 678.0 M1319.7 663.6 L1322.4 666 L1324.8 668.7 L1328.5 669.2 L1332 670.8 L1336.1 670.1 L1340.2 669.8 L1344 668.6 L1347.4 666.7 L1344.3 671.8 L1341.2 677 L1337.7 676.7 L1335.1 679 L1331.1 679.3 L1327.9 677 L1324.9 675.7 L1321.7 674.9 L1318.6 673.2 L1317.6 669.8 L1317.6 666.3 L1319.7 663.6 M1360.7 653.3 L1364.8 652.3 L1367.9 657.5 L1366 660.2 L1365.9 663.6 L1371 664.6 L1376.1 667.7 L1374.9 670.7 L1374.1 673.9 L1370.7 674.9 L1368.9 678 L1365.9 679.2 L1362.8 680 L1358.7 678 L1354.6 675.9 L1354.2 671.9 L1356.6 668.7 L1357.3 665.1 L1358.7 661.6 L1360 657.5 L1360.7 653.3 M1362.8 657.5 L1360.7 660.2 L1359.8 663.3 L1360.5 666.7 L1359.7 669.8 L1362.8 665.7 L1365.9 663.6 M1342.3 652.3 L1343.4 649 L1346.4 647.2 L1349.4 645.1 L1347.7 647.7 L1347.5 651 L1345.3 653.3 M1315.6 678 L1319.1 678.6 L1321.7 681.1 L1326.2 680.7 L1329.9 683.1 L1333.5 682 L1336.7 684.3 L1340.2 684.1 L1342.8 681.7 L1346.9 682.7 L1349.4 680 L1352.5 678.8 L1355.6 681.1 L1358.7 680 L1362.9 681.7 L1365.9 685.2 L1360.7 686.2 L1358.6 689.9 L1354.6 691.3 L1351.5 692.5 L1349.5 695.4 L1346.4 696.4 L1343.2 697.9 L1341.4 701.3 L1338.1 702.6 L1335.9 706.2 L1332 707.7 L1328.8 710.3 L1326.9 713.9 L1325.2 716.8 L1324.8 720.1 L1321.4 722.4 L1319.7 726.2 L1316.6 728.3 L1314.5 731.3 L1310.8 730.3 L1308.4 727.2 L1306.6 724.4 L1304.3 722.1 L1304.4 718.9 L1303.3 715.9 L1305.7 712.8 L1308.4 709.8 L1312 707 L1313.5 702.6 L1316.1 699 L1319.7 696.4 L1322.1 692.7 L1321.7 688.2 L1319.7 684.1 M1323.8 692.3 L1327 692.5 L1329.9 691.3 L1335.1 692.3 L1332.6 695.1 L1329.5 696.4 L1325.8 696.4 M1317.6 684.1 L1317.8 687.2 L1315.6 688.7 L1313.5 690.3 L1311.5 691.2 L1312.1 694.3 L1308.4 693.9 L1308.4 696.4 L1306.9 698 L1306.7 700.9 L1304.2 701.5 L1302.2 702.6 L1302 700 L1301.2 697.5 L1300.4 699.6 L1298.5 701.2 L1298.1 703.6 L1296.8 706.1 L1293.4 704.5 L1292 706.7 L1291.5 709.5 L1289.9 711.8 L1287.8 712.7 L1286.1 714.1 L1284.8 715.9 L1282.9 717.3 L1280.9 718.4 L1278.6 719 L1276.3 719.9 L1274.4 721.2 L1274.5 724.2 L1272.9 722.3 L1270.5 722.5 L1268.4 722.1 L1270.7 724.2 L1271.4 727.2 L1270.6 729.9 L1266.8 727.5 L1265.6 729.5 L1264.3 731.3 L1261.2 732.4 L1260.2 735.4 L1258.6 738 L1256.1 739.5 L1254 742.6 M1254 756 L1255.2 758.9 L1255 762.1 M552.1 822 L554.6 827.1 L558.7 831.2 L561.7 829.2 L563.8 832.3 L560.7 836.4 L563.8 841.5 L560.7 841.1 L557.6 840.5 L556.6 844.6 L560.7 847.7 L563.2 850.1 L565.9 852.4 L561.7 855.9 L560.3 860 L561.8 862.7 L563.8 865.1 L565 868.4 L566.9 871.3 L569.3 874.1 L571 877.4 L572.2 880.6 L574.1 883.6 L574.3 886.7 L575.1 889.7 L572.6 893.8 L575.1 896.3 L578.1 897.3 L581.2 897.5 L584.8 898.6 L588.4 899.6 L590.2 902.2 L591.5 905.1 L594.4 906.8 L597.7 907.8 L601.8 909.8 L602.2 913.9 L604.9 915.3 L607.9 916 L612 920.1 L615.7 924.6 L615.7 928.7 L616.1 932.8 L616.8 937 L618.2 941 L619.4 945.1 L620.2 949.2 L621.7 953.2 L622.3 957.5 L622.8 960.5 L623.3 963.6 L624.8 966.3 L626.8 968.7 L627.9 972.3 L628.4 975.9 L628.7 980.1 L629.5 984.1 L629.5 988.2 L631.7 991.1 L634.6 993.4 L639.7 996.4 L642 999.4 L643.8 1002.6 L647.9 1006.7 L649.6 1009.3 L651.4 1011.8 L649 1017 L646.9 1022.1 L643.8 1021.9 L640.8 1022.1 L635 1021.1 L636.7 1025.2 L640.8 1028.3 L641.2 1033.4 L644.1 1034.9 L646.9 1036.5 L649.7 1038.3 L652.1 1040.6 L656.2 1042.6 L660.3 1041.2 L658.2 1044.7 L662.3 1047.8 L665 1049.6 L667.4 1051.9 L671.5 1056 L672.1 1059.1 L673.2 1062.1 L672.9 1066.2 L673.2 1070.3 L671.5 1074.4 L672.6 1078 L673.6 1081.6 L676.4 1083.4 L678.7 1085.7 L681.1 1088.5 L683.9 1090.9 L686.2 1093.6 L689 1096 L691.7 1098.4 L694.1 1101.1 L698.2 1105.2 L698.7 1108.3 L699.3 1111.4 L702.3 1115.5 L707.5 1112.4 L709.8 1109.5 L711.6 1106.2 L708.5 1101.1 L707.3 1097.9 L705.4 1095 L701.3 1090.9 L698.2 1092.9 L696.2 1089.8 L694.1 1086.8 L693.6 1082.6 L693.1 1078.5 L691.6 1074.4 L690 1070.3 L688.2 1066.3 L686.9 1062.1 L685.6 1059.1 L684.6 1056.1 L683.9 1052.9 L682.5 1049.2 L680.8 1045.7 L678.6 1042.2 L676.7 1038.5 L674.7 1035.4 L672.6 1032.4 L670.9 1028.8 L669.5 1025.2 L668.5 1021.1 L667.4 1017 L665.1 1013.6 L663.3 1009.8 L660.9 1006.4 L659.2 1002.6 L658.1 999.3 L656.2 996.4 L654 994.1 L651.8 991.9 L650 989.3 L647.5 986.1 L644.9 983.1 L646.2 979.1 L646.9 974.9 L646.1 970.8 L645.9 966.7 L646 963.1 L645.9 959.5 L646.3 956.4 L646.9 953.3 L644.5 952.3 L647.7 954.9 L651 957.5 L656.2 960.5 L659.2 959.1 L661.6 961 L663.3 963.6 L668.5 966.7 L671.1 968.7 L671.3 971.9 L670.5 974.9 L671.6 978.7 L673.6 982.1 L674.1 986.3 L675.2 990.3 L676.5 994.4 L677.7 998.5 L678.7 1001.6 L680 1004.6 L680.8 1007.7 L682.6 1011.5 L684.9 1014.9 L687.5 1018 L690 1021.1 L692.2 1024.4 L695.1 1027.2 L698.1 1028.5 L701.3 1029.3 L700.5 1032.8 L700.3 1036.5 L701.9 1039.8 L704.4 1042.6 L709.5 1045.7 L710.5 1049.8 L713.7 1050.6 L716.7 1051.9 L720.4 1056 L717.7 1061.1 L714.6 1064.2 L715.7 1069.3 L720.8 1071.4 L722.9 1066.2 L723.3 1069.3 L722.9 1072.4 L726.1 1074.7 L729 1077.5 L731.8 1079.9 L734.1 1082.6 L736.5 1085.1 L738.6 1087.8 L740.3 1090.9 L742.3 1093.6 L744.1 1096.6 L746.5 1099.1 L749.1 1102.6 L751.6 1106.2 L753.3 1109.3 L755.4 1112 L757.7 1114.5 L760.1 1116.7 L761.8 1119.6 L763.9 1122.1 M596.6 924.6 L597.7 928.7 L599.7 928.7 M890.9 1122.1 L890.9 1117.7 L892 1113.4 L893 1110.1 L892.3 1106.6 L893 1103.2 L893.8 1099.8 L894.6 1096.4 L895 1092.9 L897.2 1089.6 L898.1 1085.7 L901.2 1082.6 L900.9 1078.5 L900.2 1074.4 L898.1 1078.5 L898.2 1075.5 L898.6 1072.4 L898.4 1069.3 L899.2 1066.2 L899.3 1062 L898.1 1058 L895 1060.1 L894.7 1055.8 L893 1051.9 L895.3 1049.5 L898.1 1047.8 L900.2 1042.6 L903.3 1037.5 L905.4 1034.9 L908.4 1033.4 L910.7 1031.1 L913.5 1029.3 L916.6 1029.3 L919.7 1029.7 L922.9 1029.5 L925.8 1028.3 L929.3 1026.1 L932 1023.1 L935.4 1020.4 L938.1 1017 L939.2 1012.9 L935.1 1013.9 L933 1010.8 L938.1 1008.8 L939.8 1011.6 L940.2 1014.9 L943.4 1014.1 L946.4 1012.5 L949.5 1011.9 L952.5 1010.8 L956.6 1010.8 L960.7 1010.4 L963.7 1011.5 L966.9 1011.2 L970.2 1012 L973 1013.9 L974.7 1011.2 L977.1 1009.2 L982.3 1009.8 L985.3 1013.9 L990.5 1017 L992.2 1020.1 L994.6 1022.7 L997.5 1021.4 L999.7 1019 L1003.8 1016.6 L1006.9 1020.1 L1009.1 1017.6 L1011 1014.9 L1016.1 1012.5 L1015.4 1015.8 L1014.1 1019 L1017.2 1023.1 L1021.3 1022.1 L1023.3 1018 L1018.2 1014.9 L1022.3 1010.8 L1023.4 1007.8 L1024.3 1004.7 L1025.2 1001.6 L1025.4 998.5 L1030.5 997.5 L1034.6 1000.1 L1037.7 996.4 L1038.7 992.3 L1039.8 995.3 L1039.7 998.5 L1044.9 996.4 L1047.9 995.7 L1051 995.4 L1055.1 995.1 L1059.2 995.4 L1063.4 995.4 L1067.4 996.4 L1070 998.3 L1072.6 1000.1 L1075.5 1002.6 L1077.7 1005.7 L1081.8 1006.7 L1086.9 1003.6 L1089.2 1000.8 L1092.1 998.5 L1095.1 998 L1098.2 998.5 L1100.6 1000.7 L1103.4 1002.6 L1106.4 1004.7 L1108.5 1007.7 L1111.4 1010.5 L1114.6 1012.9 L1117.1 1015.7 L1118.8 1019 L1119.9 1022 L1119.8 1025.2 L1118.2 1028.1 L1117.7 1031.3 L1120.8 1035.4 L1122.9 1039.5 L1120.8 1044.7 L1123.2 1047 L1124.9 1049.8 L1128 1053.9 L1131.1 1051.9 L1130 1054.8 L1130 1058 L1134.1 1062.1 L1135.8 1065 L1138.2 1067.3 L1143.4 1070.3 L1145 1073.2 L1147.5 1075.5 L1149.5 1079.6 L1152.5 1078.1 L1155.7 1077.5 L1153 1079.3 L1150.5 1081.4 L1147.5 1082.6 L1144.1 1084.2 L1141.3 1086.8 L1138.2 1088.8 L1141.5 1088.2 L1144.5 1086.9 L1147.5 1085.7 L1150.5 1084.1 L1153.6 1082.6 L1156.1 1080.4 L1158.8 1078.5 L1160.2 1075.1 L1160.8 1071.4 L1161.1 1068.3 L1161.7 1065.2 L1161.9 1062.1 L1161.4 1058 L1161.9 1053.9 L1161 1049.9 L1160.8 1045.7 L1158.9 1043.2 L1158.4 1040.1 L1156.7 1037.5 L1155.4 1034.7 L1153.5 1032.2 L1152.6 1029.3 L1151.6 1025.5 L1149.5 1022.1 L1147.2 1018.7 L1145.4 1014.9 L1144 1012.2 L1142.3 1009.7 L1141.3 1006.7 L1139.7 1004.1 L1139 1001 L1137.2 998.5 L1136 995.5 L1134.7 992.5 L1134.1 989.3 L1133.4 986.2 L1132.5 983.2 L1132.1 980 L1133.2 976 L1133.1 971.8 L1133.6 967.6 L1135.2 963.6 L1138.3 961 L1140.3 957.5 L1142.5 954.9 L1145.4 953.3 L1142.4 952.8 L1139.3 953.3 L1142.4 953.1 L1145.4 952.3 L1148.3 949.4 L1151.6 947.2 L1154.1 944.1 L1156.7 941 L1159.1 938.7 L1161.9 936.9 L1162.6 933.7 L1163.9 930.8 L1168 926.7 L1172 924.7 L1176.2 923.6 L1178.1 920.4 L1180.3 917.4 L1182.9 915.3 L1184.4 912.3 L1187.9 910.8 L1190.6 908.2 L1195.7 905.1 L1199.6 903.6 L1202.9 901 L1205.6 898 L1209.1 895.9 L1209.1 891.8 L1206 887.7 L1205.7 884.6 L1206 881.5 L1204.4 878.1 L1201.9 875.4 L1198.9 873.8 L1196.7 871.3 L1198.1 867.2 L1198.8 863 L1200.6 859.8 L1202.9 856.9 L1205.1 853 L1206 848.7 L1205.8 844.5 L1207 840.5 L1207.9 836.4 L1208 832.3 L1209.4 829.1 L1211.1 826.1 L1214.2 822.0 M1176.2 1048.8 L1179.2 1047.6 L1182.4 1047.8 L1186.5 1047.3 L1190.6 1046.7 L1194.7 1042.6 L1197.8 1042.6 L1200.8 1042.6 L1206 1045.7 L1206.5 1048.8 L1207 1051.9 L1205.9 1055.2 L1203.9 1058.0 M1194.7 1047.8 L1195.7 1050.8 M1211.1 1064.2 L1214.1 1066 L1217.3 1067.3 L1219.6 1069.7 L1222.4 1071.4 L1223.4 1076.5 M1195.7 1062.1 L1196.7 1065.2 M1229.6 1075.5 L1233.7 1079.6 L1237.8 1083.7 M1218.3 1084.7 L1221.2 1086.3 L1223.4 1088.8 L1226.2 1091.8 L1229.6 1093.9 L1232.4 1096 L1235.7 1097 L1238.8 1096.5 L1241.9 1096 L1246 1100.1 L1248 1102.7 L1250.1 1105.2 M1241.9 1088.8 L1246 1090.9 M1251.1 1082.6 L1251.1 1084.7 M1175.2 1064.2 L1175.2 1066.2 M1127 1122.1 L1129.8 1120.3 L1133.1 1119.6 L1137.2 1120.6 L1141.3 1120.6 M1270.4 1106.2 L1272.5 1104.2 M761.9 1122 L766 1125.1 L766.8 1128.7 L768 1132.3 L768.9 1135.8 L769 1139.4 L771.3 1141.8 L773.1 1144.6 L773.1 1148.2 L773.1 1151.8 L769 1155.9 L766 1158.9 L769 1158.9 L772.1 1158.9 L771.1 1162 L766 1162 L764.3 1167.2 L767 1172.3 L769.2 1174.7 L771.1 1177.4 L774.2 1182.5 L777.4 1183.8 L780.3 1185.6 L783.4 1186.6 L786.5 1187.7 L789.2 1190 L791.6 1192.8 L794.1 1195.4 L796.7 1197.9 L798.8 1203.1 L802.8 1204.4 L807 1205.1 L811.2 1206.4 L815.2 1208.2 L819.3 1208.8 L823.4 1209.2 L825.3 1211.9 L827.5 1214.4 L830.8 1216.7 L833.7 1219.5 L836.3 1221.1 L839 1222.5 L841.9 1223.6 L846 1225 L850.1 1226.7 L854 1229.7 M890.9 1122 L890.2 1126.1 L889.3 1130.2 L889.7 1134.4 L890.9 1138.4 L891.9 1142.5 L893 1146.6 L894.6 1149.7 L896.1 1152.8 L896.6 1157 L898.1 1161 L899.9 1164.8 L902.2 1168.2 L905 1171.7 L907.4 1175.4 L909.7 1178.3 L911.5 1181.5 L913.7 1185 L915.6 1188.7 L917.7 1191.7 L919.7 1194.9 L924.8 1197.9 L928.3 1199 L932 1199 L934.9 1200.8 L938.1 1202 L939.8 1205.4 L942.3 1208.2 L946.4 1207.2 L950.6 1206 L954.6 1204.1 L958.8 1203.5 L962.8 1202 L965.8 1201 L968.9 1201 L973 1199.5 L977.1 1197.9 L980 1199.5 L983.3 1200 L986.5 1199.5 L989.5 1197.9 L992.3 1195.1 L995.6 1192.8 L998.1 1190.2 L1000.7 1187.7 L1002.4 1184.7 L1003.8 1181.5 L1004.7 1177.4 L1005.9 1173.3 L1006.4 1169.2 L1006.9 1165.1 L1006.9 1161.9 L1007.9 1158.9 L1012 1154.8 L1016.1 1153.2 L1020.2 1151.8 L1023.3 1151.1 L1026.3 1149.8 L1029.5 1149.7 L1032.4 1148.3 L1035.8 1148.2 L1038.7 1146.6 L1042.1 1147.3 L1045.5 1147.8 L1049 1147.7 L1053.1 1146.5 L1057.2 1145 L1062.3 1146.2 L1063.5 1149.7 L1065.4 1152.8 L1065 1157.9 L1061.3 1162 L1064.3 1163 L1067.4 1163 L1064.6 1165.3 L1062.3 1168.2 L1059.2 1165.1 L1058.2 1168.4 L1056.2 1171.3 L1054.1 1176.4 L1051 1180.5 L1056.2 1181.5 L1054.5 1184.5 L1053.1 1187.7 L1052.3 1190.8 L1051 1193.8 L1046.9 1192.8 L1044.7 1195.2 L1042.8 1197.9 L1044.9 1203.1 L1047.9 1199 L1050 1204.1 L1051 1208.2 L1046.9 1212.3 L1049 1217.4 L1053.1 1219.5 L1047.9 1221.5 L1045.9 1226.7 L1045.6 1229.8 L1044.9 1232.8 L1041.8 1238 L1036.7 1240 L1034.6 1244.1 L1038.7 1247.2 L1042.8 1243.1 L1040.8 1247.2 L1044.4 1246.7 L1047.9 1246.2 L1051.3 1245.1 L1054.1 1243.1 L1057.7 1243.7 L1061.3 1244.1 L1065.4 1244.3 L1069.5 1245.1 L1073.6 1244.1 L1077.7 1243.1 L1080.7 1241.5 L1083.9 1240 L1087.9 1241.1 L1092.1 1241 L1095.6 1239.8 L1099.3 1239 L1102.9 1239.3 L1106.4 1240 L1109.4 1241.7 L1112.6 1243.1 L1115.8 1243.7 L1118.8 1245.1 L1121.8 1246.8 L1124.9 1248.2 L1130 1251.3 L1132.1 1255.4 L1131 1259.4 L1131.1 1263.6 L1130.5 1266.7 L1130 1269.8 L1128 1274.9 L1127.9 1278 L1127.3 1281.1 L1127 1284.1 L1127.4 1288.2 L1128 1292.3 L1127.4 1295.6 L1125.9 1298.5 L1125.9 1302.7 L1124.9 1306.7 L1125.9 1309.7 L1125.9 1312.9 L1125.1 1316 L1123.9 1319 L1125.9 1324.2 L1128.1 1326.7 L1130 1329.3 L1132.3 1332.2 L1134.1 1335.4 L1137.4 1338.3 L1140.3 1341.6 L1144.2 1343.8 L1147.5 1346.7 L1150.5 1348.8 L1153.6 1350.8 L1156.2 1352.9 L1159 1354.4 L1161.9 1356 L1165.9 1357.6 L1170.1 1359 L1173.7 1358.7 L1177.2 1358 L1180.6 1355.2 L1184.4 1352.9 L1187.3 1351.4 L1189.9 1349.4 L1192.6 1347.8 L1195.4 1345.8 L1198.2 1343.8 L1200.8 1341.6 L1204.3 1341.2 L1207.7 1340.7 L1211.1 1340.6 L1214.6 1340.6 L1218 1340.9 L1221.4 1341.6 L1225.5 1342.1 L1229.6 1342.6 L1233.2 1344.6 L1236.8 1346.7 L1239.8 1349.9 L1242.9 1352.9 L1245.9 1355 L1248 1358 L1250.2 1360.3 L1251.7 1363.1 L1254 1365.2 M1066.4 1241 L1069.5 1238.0 M1072.6 1234.9 L1076.1 1233.5 L1079.8 1232.8 L1082.7 1231.3 L1085.9 1230.8 M854 1228.7 L856.9 1230.7 L860.2 1231.8 L863.8 1232.2 L867.3 1232.8 L871.1 1233.9 L874.5 1235.9 L877.7 1238.4 L880.7 1241 L883.4 1242.3 L886 1244 L888.9 1245.1 L892.1 1245.7 L895.2 1246.9 L898.1 1248.2 L902 1250.3 L906.3 1251.3 L910.5 1251.4 L914.5 1250.9 L918 1248.9 L921.7 1247.6 L925.2 1245.7 L928.9 1244.1 L931.4 1241.9 L934 1240 L937.2 1239.7 L940.2 1239 L943.8 1240.1 L947.4 1241 L950.8 1243.5 L954.6 1245.1 L957.4 1248.5 L960.7 1251.3 L963.8 1254.4 L966.9 1257.5 L969.8 1260.7 L973 1263.6 L975.6 1266.2 L978.3 1268.6 L981.2 1270.8 L984 1272.8 L986.5 1275.2 L989.5 1277 L993.5 1278.9 L997.7 1280.4 L1001.9 1280.2 L1005.9 1279 L1010.1 1279.6 L1014.1 1281.1 L1016.6 1282.8 L1019.8 1283.3 L1022.3 1285.2 L1026.3 1286.5 L1030.5 1287.2 L1034.6 1288.8 L1038.7 1290.3 L1042.8 1290.8 L1046.9 1291.3 L1050.1 1291.5 L1053.1 1290.7 L1056.2 1290.3 L1054.1 1286.2 L1058.2 1286.3 L1062.3 1286.6 L1061 1289.4 L1060.3 1292.3 L1062.5 1294.7 L1065.4 1296.4 L1067.9 1299.6 L1070.5 1302.6 L1073.7 1305.6 L1076.7 1308.8 L1079.8 1311.8 L1082.8 1314.9 L1085.9 1317.4 L1089 1320.1 L1091.4 1322.8 L1094.1 1325.2 L1095.1 1329.3 L1091 1328.3 L1092.3 1331.8 L1093.1 1335.4 L1092.7 1339.1 L1092.1 1342.6 L1097.2 1344.7 L1100.3 1345.8 L1103.4 1346.7 L1107.5 1349.8 L1108.4 1346.7 L1109.5 1343.7 L1105.4 1339.5 L1102.3 1338.5 L1106 1339.9 L1109.5 1341.6 L1111.8 1344.9 L1114.6 1347.8 L1117.6 1349.2 L1120.8 1349.8 L1124.4 1351.9 L1128 1353.9 L1130.6 1355.9 L1133.1 1358 L1134 1361 L1134.1 1364.2 L1130 1365.2 L1135.2 1368.3 L1138.2 1367 L1141.3 1366.2 L1140.3 1370.3 L1143.9 1369.9 L1147.5 1370.3 L1147.5 1375.5 L1148.6 1372.4 L1149.5 1369.3 L1153.7 1368.9 L1157.7 1368.3 L1162 1369.4 L1166 1371.4 L1167.6 1374.7 L1170.1 1377.5 L1175.2 1378.5 L1178.3 1373.4 L1179.5 1376.9 L1180.3 1380.6 L1182.1 1383.4 L1184.4 1385.7 L1188.6 1385.1 L1192.6 1383.7 L1196.5 1381.6 L1199.8 1378.5 L1197 1376.8 L1194.7 1374.4 L1192.1 1371.4 L1189.6 1368.3 L1190.6 1365.2 L1194.4 1363.6 L1197.8 1361.1 L1199 1358 L1200.7 1355.3 L1202.9 1352.9 L1205.7 1351.6 L1208.4 1350.1 L1211.1 1348.8 L1213.6 1350.6 L1216.4 1351.8 L1219.3 1352.9 L1222.4 1355 L1225.5 1357 L1229.6 1361.1 L1233.5 1362.7 L1237.8 1363.1 L1233.7 1362.1 L1229.6 1361.1 L1226.5 1366.2 L1228 1369.3 L1229.6 1372.4 L1232 1375.6 L1234.7 1378.5 L1236.9 1380.8 L1238.9 1383.2 L1240.9 1385.7 L1246 1388.8 L1246.9 1392.9 L1248 1397 L1249.6 1400 L1250.3 1403.4 L1252.2 1406.2 M1092.1 1139.4 L1095 1138 L1098.2 1137.4 L1100.3 1140.5 L1103.4 1136.4 L1106.9 1134.7 L1110.5 1133.3 L1114.6 1131.6 L1118.8 1130.2 L1123.9 1127.1 L1127.5 1125.7 L1131.1 1124.1 L1134.5 1124.1 L1137.9 1124.5 L1141.3 1124.1 L1137.2 1127.1 L1141.1 1129.2 L1145.4 1130.2 L1148.5 1129.7 L1151.6 1129.2 L1155 1129.1 L1158.4 1129.3 L1161.9 1129.2 L1166 1132.3 L1169.9 1133.9 L1174.2 1134.3 L1177.6 1134.8 L1181 1135.7 L1184.4 1136.4 L1188.6 1136.2 L1192.6 1135.3 L1194.7 1140.5 L1198 1143.3 L1200.8 1146.6 L1205 1146.9 L1209.1 1147.7 L1213.1 1148.7 L1217.3 1148.7 L1219.3 1152.8 L1215.2 1156.9 L1210.1 1158.9 L1212.1 1163 L1215.3 1162.4 L1218.3 1161 L1221.4 1160 L1224.7 1158.8 L1228.3 1159.1 L1231.6 1157.9 L1235.1 1157.5 L1238.5 1156.9 L1241.9 1155.9 L1245.1 1155.7 L1248.1 1154.8 L1250.9 1153.5 L1254 1152.8 M1100.3 1134.3 L1100.9 1131.1 L1102.3 1128.2 L1105.3 1125.9 L1108.5 1124.1 L1111.6 1123 L1114.6 1122.0 M1180.3 1142.5 L1183.5 1143.9 L1186.5 1145.6 L1189.4 1147.8 L1192.6 1149.7 L1195.8 1149.6 L1198.8 1150.7 L1196.7 1145.6 M1121.8 1136.4 L1125.9 1134.3 L1130 1136.4 L1131.1 1141.5 L1127 1143.5 L1121.8 1141.5 L1121.8 1136.4 M1139.3 1139.4 L1141.3 1140.5 M1146.5 1137.4 L1149.5 1136.4 M1203.9 1188.7 L1207.4 1186.9 L1211.1 1185.6 L1214.6 1185.7 L1218 1185 L1221.4 1184.6 L1224.8 1185.1 L1228.2 1184.9 L1231.6 1185.6 L1234.4 1187.3 L1237.1 1189.1 L1239.8 1190.8 L1236.9 1192.5 L1233.7 1193.8 L1230.6 1193.1 L1227.5 1192.8 L1223.4 1196.9 L1219.3 1195.8 L1215.2 1194.9 L1212.3 1193.3 L1209.1 1192.8 L1206.5 1190.7 L1203.9 1188.7 M1173.1 1168.8 L1176.2 1167.7 L1179.3 1166.7 M1058.2 1194.9 L1058.8 1199.0 M1137.2 1303 L1139.3 1300.6 M1278.6 1152.8 L1281.4 1149.9 L1284.8 1147.7 L1288.9 1147.2 L1293 1147.7 L1297 1149.5 L1301.2 1150.7 L1304 1148.3 L1307.4 1146.6 L1311.3 1145.1 L1315.6 1144.6 L1318.6 1144 L1321.7 1144.3 L1324.8 1144.2 L1328.8 1145.3 L1333 1145.6 L1335.5 1148.3 L1338.1 1150.7 L1341.3 1150.6 L1344.3 1149.7 L1347.7 1151.3 L1350.5 1153.8 L1354.2 1154.3 L1357.6 1155.9 L1360.6 1157.7 L1363.8 1158.9 L1362.8 1163 L1358.7 1166.1 L1355.5 1165.3 L1352.5 1164.1 L1348.4 1164.3 L1344.3 1165.1 L1341.3 1165.8 L1338.1 1166.1 L1335.1 1171.3 L1331.5 1171.7 L1327.9 1171.3 L1323.8 1171.3 L1322.5 1174.5 L1320.7 1177.4 L1319.1 1181.2 L1316.6 1184.6 L1313.5 1182.5 L1311.9 1179.2 L1309.4 1176.4 L1305.3 1174.3 L1302.2 1175.3 L1299.2 1176.4 L1295.6 1177.6 L1292 1178.4 L1288.4 1179 L1284.8 1179.5 L1280.7 1181.1 L1276.6 1182.5 L1273.4 1182.6 L1270.4 1181.5 L1266.3 1178.4 L1267.3 1174.3 L1270.5 1174.3 L1273.5 1173.3 L1277.1 1173.9 L1280.7 1174.3 L1284.9 1174.4 L1288.9 1173.3 L1292.5 1172.2 L1296.1 1171.3 L1298.1 1168.2 L1293 1166.1 L1288.9 1166.5 L1284.8 1167.2 L1289.9 1165.1 L1292 1160 L1287.9 1156.9 L1284.2 1156.7 L1280.7 1155.9 L1278.6 1152.8 M1268.4 1176.4 L1271.8 1176.2 L1275.2 1177.6 L1278.6 1177.4 L1282.8 1177 L1286.8 1175.8 L1290.9 1174.8 L1295 1174.3 M1254 1141.5 L1257 1143.1 L1260.2 1144.6 L1263 1146.6 L1266.3 1147.7 L1262.2 1150.7 L1259.1 1151.8 L1256.1 1152.8 L1254 1153.8 M1270.4 1131.2 L1274.5 1128.2 L1277.7 1128.2 L1280.7 1127.1 L1281.7 1130.2 L1277.6 1133.3 L1272.5 1134.7 L1270.4 1131.2 M1280.7 1123 L1283.8 1122.0 M1381.2 1157.9 L1384.2 1156.1 L1387.4 1154.8 L1390.8 1154 L1394.3 1153.7 L1397.7 1152.8 L1400.7 1152.3 L1403.8 1152.3 L1406.9 1152.4 L1409.9 1153.5 L1413.1 1153.8 L1412 1156.9 L1406.9 1160 L1403.3 1161.5 L1399.7 1163 L1395.5 1163.7 L1391.5 1165.1 L1387.9 1165.4 L1384.3 1165.1 L1381.2 1162 L1381.2 1157.9 M1418.2 1152.8 L1422.3 1150.7 M1424.3 1146.6 L1427.4 1145.6 M1476.7 1174.3 L1479.8 1170.2 L1483.9 1172.3 L1489 1169.2 L1484.9 1173.3 L1481.8 1178.4 L1478.7 1179.5 L1476.7 1174.3 M1484.9 1183.6 L1488 1182.5 L1489.6 1186.6 L1487.6 1189.3 L1484.9 1187.3 L1484.9 1183.6 M1497.2 1208.2 L1500.3 1207.2 L1501.3 1212.3 L1498.2 1213.3 L1497.2 1208.2 M1254 1349.8 L1255.9 1347.1 L1258.1 1344.7 L1260.4 1340.9 L1263.2 1337.5 L1268.4 1335.4 L1268.4 1332.3 L1267.3 1329.3 L1269.4 1324.2 L1266.3 1323.1 L1267.1 1320 L1268.4 1317 L1270.4 1312.9 L1273.5 1309.8 L1276.6 1306.7 L1280.7 1304.7 L1283.6 1306.6 L1285.8 1309.2 L1286.9 1305.9 L1287.9 1302.6 L1292 1298.5 L1295.1 1298.6 L1298.1 1298.9 L1301.2 1297.6 L1304.3 1296.4 L1306.5 1294 L1309.4 1292.3 L1312.2 1289.4 L1315.6 1287.2 L1319.7 1283.1 L1321.1 1280.2 L1321.7 1277 L1325.8 1273.9 L1328.9 1272.9 L1332 1272.2 L1337.1 1274.9 L1338.6 1280 L1335.1 1284.1 L1329.9 1286.2 L1326.9 1289.3 L1327.9 1294.4 L1333 1297.5 L1336.1 1302.6 L1335.1 1307.7 L1331 1311.8 L1328.3 1317 L1329.4 1320.5 L1329.9 1324.2 L1332.8 1327 L1335.1 1330.3 L1338.2 1330.6 L1341.2 1331.3 L1343.6 1328.5 L1346.4 1326.2 L1346.6 1322.5 L1348 1319 L1346.8 1315.9 L1345.3 1312.9 L1342.6 1311 L1340.2 1308.8 L1336.1 1304.7 L1336.7 1301.4 L1338.1 1298.5 L1341.4 1296.1 L1344.3 1293.4 L1346.8 1291.6 L1349.7 1290.4 L1352.5 1289.3 L1355.4 1288.3 L1357.8 1286.1 L1360.7 1285.2 L1358.7 1281.1 L1354.6 1278 L1356 1274.4 L1357.6 1270.8 L1359.4 1274.1 L1361.7 1277 L1362.4 1280.1 L1363.8 1283.1 L1368.9 1281.1 L1373 1280.3 L1377.1 1280.4 L1380.3 1281.1 L1383.3 1282.1 L1385.7 1284.3 L1388.4 1286.2 L1389.6 1289.2 L1390.5 1292.3 L1395.6 1295.4 L1399.9 1294.4 L1403.8 1292.3 L1407.1 1290.8 L1410.8 1290.4 L1414.1 1288.6 L1417.5 1287.5 L1420.8 1286 L1424.3 1285.2 L1428.4 1288.2 L1433.6 1291.3 L1436.7 1291.3 L1439.7 1290.9 L1442.8 1291.3 L1445.9 1291.4 L1449 1290.6 L1452.1 1290.7 L1455 1287.7 L1457.2 1284.1 L1461.3 1280 L1464.4 1278.1 L1467.4 1275.9 L1471.5 1275.3 L1475.7 1274.9 L1479.6 1273.1 L1483.9 1271.8 L1488 1270.4 L1492.1 1268.7 L1496.1 1266.9 L1500.3 1265.7 L1504.5 1265.1 L1508.5 1263.6 L1513.6 1260.5 L1514.1 1264.1 L1513.6 1267.7 L1515.7 1272.8 L1510.5 1275.9 L1507.5 1278 L1504.4 1280 L1507.5 1280.6 L1510.5 1281.1 L1514.7 1281.8 L1518.8 1283.1 L1522.9 1286.2 L1523.9 1289.1 L1525.7 1291.6 L1527 1294.4 L1530 1297.5 L1533.5 1297.5 L1536.9 1297.1 L1540.3 1296.9 L1543.4 1297.5 L1546.5 1298.5 L1549.5 1299.5 L1553.8 1300.1 L1557.7 1301.6 L1561.5 1303.3 L1564.9 1305.7 L1567.2 1308.5 L1570.1 1310.8 L1571.3 1313.8 L1572.1 1317 L1571.9 1320.4 L1572.6 1323.8 L1572.1 1327.2 L1572.5 1323.8 L1572.6 1320.4 L1573.1 1317 L1576.7 1318 L1580.3 1319 L1584.5 1320.3 L1588.5 1322.1 L1592.1 1322.3 L1595.4 1323.2 L1598.8 1324.2 L1599.8 1327.9 L1600.6 1331.6 L1600.8 1335.4 L1601.2 1332 L1600.9 1328.6 L1601.3 1325.2 L1604.5 1325.1 L1607.8 1325.7 L1611.1 1325.2 L1614.5 1325.4 L1618 1325.4 L1621.4 1324.8 L1623.4 1327.2 L1622.4 1324.2 L1625.3 1322.1 L1627.5 1319.4 L1630.9 1318.5 L1634.3 1318.2 L1637.8 1318.0 M1480.8 1273.9 L1483.7 1272.3 L1487 1272 L1490 1270.8 L1493.5 1269.6 L1496.8 1267.9 L1500.3 1266.7 L1504.3 1265.1 L1508.5 1263.6 L1509.9 1266.8 L1511.6 1269.8 L1509.8 1272.7 L1508.5 1275.9 L1505.9 1277.9 L1502.8 1279 L1500.3 1281.1 L1497.8 1283.7 L1495.1 1286.2 L1492.1 1283.1 L1489.1 1280.9 L1485.9 1279 L1483.1 1276.7 L1480.8 1273.9 M1254 1351.9 L1254.3 1355.5 L1253.9 1359.1 L1253.6 1362.7 L1253 1366.2 M721.7 222 L724.2 224.1 L725.9 226.8 L728.8 228.1 L731.4 229.8 L736.2 231 L741 229.2 L742.8 232.9 L748.2 232.3 L753.1 235.3 L755.8 237 L756.7 240.1 L759.1 244.9 L760.3 247.9 L757.9 251.5 L754.9 247.9 L750.7 248.5 L746.4 252.1 L745.8 255.8 L742.2 257 L744.9 258.4 L747 260.6 L751.9 261.8 L754.7 263.6 L757.9 264.8 L761.7 265.3 L765.1 267.2 L768.3 267.4 L771.2 266 L774.2 265.6 L777.2 264.8 L780 266.2 L783.2 266.6 L785.6 264.3 L788.6 263 L792.9 261.2 L795.3 264.2 L796.5 268.4 L801.3 269.6 L804.9 272.7 L802.5 276.3 L806.1 278.7 L809.1 279.3 L812.2 282.9 L809.2 284 L806.1 284.7 L808.5 289.5 L811.6 294.4 L814 298.6 L816.4 301 L817 305.2 M817 305.2 L816.4 300.4 L817.4 297.5 L817.6 294.4 L819.4 289.5 L818.8 285.3 L815.8 283.5 L814.6 279.9 L813.9 276.3 L814 272.7 L812.8 267.8 L815.2 264.2 L819.4 261.8 L824.2 260 L827.8 258.2 L829 260.6 L827.3 257.8 L827.8 254.6 L825.4 252.8 L830.2 250.9 L833.4 251.1 L836.3 249.7 L839.3 250.3 L839.9 254.6 L842.3 257.6 L845.3 260.6 L847.1 264.2 L852 264.8 L855.6 263.6 L858 266.6 L861.6 269.6 L864 272.7 L867 274.5 L871.2 275.1 L874.4 275.1 L877.3 273.9 L880.9 272.7 L885.7 270.8 L889.9 272.7 L895.4 274.5 L898.4 273.9 L901.4 274.5 L905 272.7 L907.4 275.1 L911 278.7 L915.3 275.1 L913.5 270.2 L909.2 268.4 L905 270.2 M746.4 222.6 L749.9 222.1 L753.1 223.8 L756.7 224.7 L760.3 223.8 L765.1 225 L765.7 230.4 L765.1 235.3 L762.7 237.1 L765.1 241.3 L767.5 244.9 L772.4 246.7 L777.2 244.9 L780.8 245.2 L784.4 244.9 L789.2 244.3 L794.1 245.5 L796.9 243.8 L800.1 244.3 L803.1 243.4 L806.1 243.7 L809.7 240.7 L811.6 238.9 L814.8 237.7 L818.2 238.3 L821.8 237.7 L825.4 234.1 L827.8 231 L826.6 228.6 L829.6 226.8 L832.1 228.6 L831.5 232.9 L833.9 234.1 L837.5 235.3 L841.7 238.9 L844.7 240.7 L844.7 243.7 L849.5 244.3 L853 245.9 L856.8 246.1 L861.6 246.7 L865.2 244.3 L870 241.9 L873.1 238.9 L871.9 234.7 L870 231 L867 228.6 L862.8 229.2 L863.4 234.1 L861 236.5 L858.6 237.1 L862.2 233.5 L861.6 228 L859.2 225 L860.4 222.0 M838.7 245.5 L835.1 243.1 L831.5 242.5 L827.8 243.1 L825.2 245.2 L821.8 245.5 L818.7 245.7 L815.8 246.7 L811.6 247.9 L809.7 251.5 L806.1 255.2 L808.5 258.2 L813.4 258.8 L815.8 256.4 L814 258.8 L815.8 261.8 L820.6 259.4 L825.4 256.4 L827.8 253.4 L831.5 250.3 L836.3 249.1 L839.9 247.9 L838.7 245.5 M815.8 256.4 L819.4 254.6 L823 256.4 L820.6 258.2 M908.6 222 L906.2 226.8 L903.8 231.6 L902.2 234.2 L900.2 236.5 L897.4 237.8 L895.4 240.1 L892.4 243.1 L894.2 246.1 L899 247.3 L903.8 250.3 L907.4 253.4 L911 255.2 L914.7 257 L917.7 257.8 L920.7 257 L924.3 255.8 L927.9 252.8 L931.5 250.3 L932.8 247.9 L929.1 246.1 L926.7 242.5 L924.3 238.9 L923.1 234.1 L919.5 231.6 L915.9 229.2 L913.5 226.2 L911 223.2 L910.4 222.0 M924.3 222 L927.9 225 L932.8 227.4 L937.6 228.6 L941.2 232.3 L946 231 L949.6 232.9 L947.2 236.5 L942.4 238.9 L941.2 242.5 L939.4 247.9 L940.6 250.9 L942.3 247.1 L944.8 243.7 L946 247.9 L949 252.8 L946 255.2 L944.3 258 L941.2 259.4 L937 263.6 L932.8 267.2 L929.1 270.2 L928.7 273.5 L930.3 276.3 L930.2 279.3 L929.7 282.3 L932.2 285.9 L930.9 290.7 L933.4 295 L929.7 299.2 L927.9 303.4 L926.1 301 L923.1 296.8 L920.7 291.9 L923.1 291.9 L925.5 286.5 L920.7 283.5 L921.9 278.7 L923.8 276 L923.7 272.7 L923.9 269.6 L923.1 266.6 L920.7 261.8 L915.9 260.6 L913.5 257.6 M953.3 226.8 L956.9 223.8 L960 222.6 M905 258.2 L901.4 259.4 L902.6 262.4 L899 265.4 L900.8 269 L905 270.2 M1392.9 555.6 L1395.9 554.6 L1398.2 552.4 L1399.6 555.6 L1399.1 559.1 L1397.3 561.8 L1399.6 563.6 L1399.1 568 L1396.4 569.8 L1397.3 572.4 L1395.1 574.2 L1395.1 578.7 L1394.7 584 L1392.9 585.8 L1392.9 591.1 L1394.7 595.6 L1396 593.8 L1395.6 589.3 L1397.3 584.9 L1399.1 582.7 L1401.8 584 L1407.1 582.7 L1406.2 585.8 L1403.6 587.6 L1401.8 590.2 L1400.4 592.9 L1403.6 593.8 L1407.1 592.9 L1410.7 591.1 L1414.2 592 L1416.9 591.1 L1421.3 588.9 L1425.8 586.7 L1430.2 586.2 L1433.8 587.6 L1435.6 590.2 L1434.7 593.8 L1432 596.4 L1430.2 599.1 L1428.4 601.3 L1431.1 600 L1433.8 601.8 L1437.3 602.2 L1440.9 600.9 L1443.6 598.2 L1442.7 596.4 L1445.3 598.2 L1445.8 601.8 L1443.6 604.4 L1446.2 607.1 L1448.9 607.6 L1449.8 610.7 L1448 614.2 L1448.9 617.8 L1450.7 621.3 L1452.4 617.8 L1450.7 614.2 L1452.4 612.4 L1455.6 613.8 L1456 617.8 L1455.7 621.3 L1456 624.9 L1455.9 628 L1455.6 631.1 L1453.3 635.6 L1450.7 632.9 L1448.9 630.2 L1447.1 627.6 L1445.3 626.7 L1444.4 629.3 L1448 632.9 L1449.8 637.3 L1447.1 635.6 L1444.4 632 L1441.8 630.2 L1440.9 634.7 L1439.1 633.8 L1438.2 629.3 L1440 625.8 L1439.1 622.2 L1437.3 617.8 L1435.6 616 L1434.7 619.6 L1435.6 623.1 L1432.9 624.9 L1430.2 626.7 L1427.6 625.8 L1425.8 621.3 L1424.9 624.9 L1426.7 629.3 L1427.6 633.8 L1425.8 639.1 L1422.2 639.6 L1416.9 639.1 L1420.4 635.6 L1424 632 L1422.2 628.4 L1420.4 623.1 L1421.3 626.7 L1416.9 628.4 L1413.3 629.3 L1412.4 624.9 L1409.8 625.8 L1406.2 628.4 L1402.7 631.1 L1401.8 632.9 L1398.7 633.8 L1395.6 632.9 L1392 632.5 L1388.4 632.9 L1384.9 633.8 L1382.2 636.4 L1378.7 639.1 L1375.1 639.1 L1373.3 635.6 L1372.4 631.1 L1375.1 627.6 L1377.8 624 L1376 622.2 L1372.4 623.1 L1370.2 621.3 L1372.4 618.7 L1376 616 L1376.9 610.7 L1377.8 608 L1381.3 608 L1383.1 610.7 L1380.4 605.3 L1378.7 601.8 L1381.3 599.1 L1381.2 595.1 L1381.3 591.1 L1381.1 586.7 L1380.9 582.2 L1380.4 577.8 L1383.1 575.1 L1384.9 569.8 L1384.9 564.4 L1384 562.7 L1387.6 559.1 L1390.7 558 L1392.9 555.6 M1100 258.2 L1101.2 253.4 L1104.8 249.1 L1107.9 249 L1110.9 247.9 L1113.9 247.2 L1116.9 248.3 L1119.3 250.9 L1119.2 254 L1119.9 257 L1121.7 261.8 L1121.7 266.6 L1119.3 270.8 L1115.7 273.9 L1110.9 276.3 L1106 278.1 L1102.4 276.3 L1100 272.7 M1102.4 222 L1104.5 224.3 L1107.2 225.6 L1110 227.7 L1112.1 230.4 L1116.9 229.2 L1119.3 232.9 L1121.7 237.7 L1125.3 238.9 L1128.9 240.1 L1130.1 243.7 L1135 244.3 L1138.6 247.9 L1139.8 252.1 L1142.2 257 L1143.9 260 L1145.8 263 L1146.8 266.8 L1149.4 269.6 L1147.6 272.7 L1144.6 275.7 L1142.2 278.7 L1142.8 282.3 L1139.8 285.9 L1137.8 288.5 L1136.2 291.3 L1134.3 294 L1132.6 296.8 L1132.6 300.4 L1136.2 304.6 L1141 307.6 L1143.4 311.8 L1139.8 313.7 L1137.7 315.9 L1135 317.3 L1130.1 318.5 L1127.7 322.1 L1124.7 323 L1121.7 322.1 M1100 234.1 L1104.8 233.5 L1107.8 232.9 L1110.9 232.9 L1109.2 235.4 L1107.2 237.7 L1103.6 241.3 L1101.2 237.7 L1100 234.1 M1121.7 322.1 L1118.5 321.4 L1115.7 319.7 L1112.6 319.5 L1109.6 318.5 L1104.8 319.7 L1106 324.5 L1102.4 328.1 L1100 331.7 M1100 340.8 L1103.6 343.8 L1108.4 346.2 L1113.3 347.4 L1118.1 345.6 L1122.9 342.6 L1125.9 339 L1125.3 334.2 L1127.7 330.5 L1125.3 326.9 L1122.9 324.9 L1121.7 322.1 M1142.8 282.3 L1146.7 283 L1150.7 282.9 L1153.6 283.8 L1156.7 284.1 L1159.1 279.9 L1157.9 275.1 L1160.3 272.7 L1163.9 273.9 L1166.3 277.5 L1169.4 277.6 L1172.4 278.7 L1177.2 281.1 L1180.2 284.7 L1178.4 289.5 L1174.8 290.7 L1171.2 288.3 L1168.7 293.2 L1165.1 296.8 L1162.7 299.2 L1162.2 296.2 L1162.7 293.2 L1160.3 288.3 L1157.9 284.7 M1125.9 328.1 L1128 329.4 L1130.1 330.5 L1132.5 329.7 L1135 329.3 L1134.1 332.1 L1136.2 334.2 L1138.5 333 L1141 333 L1142.9 335 L1143.4 337.8 L1145.9 337.7 L1145.9 334.3 L1148.2 334.2 L1149.3 336.1 L1150.7 337.8 L1152.7 339.4 L1153 342.5 L1155.5 343.8 L1157 345.1 L1158.1 347 L1160.3 347.4 L1163.2 347.6 L1165.1 349.8 L1166.4 351.5 L1168.1 352.5 L1169.9 353.5 L1168.9 355.9 L1167.5 358.3 L1168.6 360.2 L1170 361.6 L1172.4 361.9 L1175.4 361.9 L1177.2 364.3 L1179.9 364.8 L1182 366.7 L1184.2 366.8 L1186.3 366.9 L1188 368.5 L1189.6 366.4 L1191.8 366.6 L1194.1 366.7 L1196.3 368.9 L1196.5 372 L1198.2 373.3 L1200.4 373.1 L1202.7 372.6 L1204.4 373.9 L1206.2 375 L1208.2 375.3 L1210 376.4 L1212.3 375.7 L1214.5 375.9 L1216.6 376.2 L1217.8 380.1 L1220 379.8 L1222.6 378 L1224.1 380.7 L1226.4 380.5 L1228.5 382.5 L1231.2 381.4 L1233.6 381.6 L1231.1 380.3 L1231 377.5 L1229.5 375.5 L1228.4 373.4 M1166.3 224.4 L1168.1 225.8 L1170.7 225.1 L1172.4 226.8 L1173.4 224.8 L1174.7 223.3 L1177.2 223.2 L1179.9 222.3 L1180.8 225.8 L1183.2 225.6 L1182.5 228.4 L1184.4 230.4 L1187 230 L1189.4 230 L1191.7 231.6 L1193.1 233.8 L1195.3 235.3 L1197.1 237.7 L1200.1 237.7 L1199.8 240.9 L1202.5 242.5 L1204.3 240.1 L1207.3 240.1 L1210.3 239.9 L1212.2 237.7 L1211.5 240.4 L1213.4 242.5 L1215.5 244 L1218.2 243.7 L1220.4 244.3 L1221.8 246.1 L1223.6 248.2 L1223 250.9 L1220.7 252 L1220.6 254.6 L1220.7 257.1 L1219.4 259.4 L1221.8 260.6 L1222.2 258.5 L1223.8 257.1 L1224 254.9 L1225.4 253.4 L1227.8 254 L1229.1 251.2 L1231.5 251.5 L1233.9 254 L1233.2 256.9 L1230.2 257 L1229.4 259.3 L1229 261.8 L1231.5 264.2 L1234.1 263.5 L1236.3 261.8 L1238.8 261.7 L1239.9 259.4 L1242.3 258.2 L1243.5 255.8 L1246.1 257.1 L1248.3 255.2 L1248.8 257.9 L1251.6 258 L1253.2 259.4 L1253.5 261.8 L1253.8 264.2 L1254.1 267.1 L1252 269 L1250.7 271.4 L1248.3 272.7 L1246.3 274.2 L1244.7 276.3 L1247.4 275.5 L1248.5 278.6 L1250.7 278.7 L1249.9 281 L1247.7 281.3 L1245.9 282.3 L1244.5 285 L1248.3 286.9 L1247.1 289.5 L1244.7 287.1 L1244.2 290.2 L1241.1 290.7 L1240.1 292.7 L1238.7 294.4 L1241 296.2 L1241.1 299.2 L1241.5 302 L1243.5 304 L1244 306.9 L1241.1 307.6 L1239.3 305.2 L1236.3 305.2 L1233.9 303.8 L1231.5 305.2 L1230.5 303.1 L1228.1 303 L1226.6 301.6 L1224.2 300.4 L1223 298 L1222.3 296 L1220.6 294.7 L1219.4 293.2 L1221.8 291.9 L1220.3 290.5 L1218.9 289.1 L1218.2 287.1 L1215.8 284.7 L1215.1 282.7 L1215.6 280.6 L1214.6 278.7 L1211.8 279.6 L1211 282.3 L1210.3 279.8 L1206.9 281 L1206.1 278.7 L1203.7 277.4 L1202.5 275.1 L1200.1 275.3 L1197.7 275.1 L1195.7 276.1 L1194.1 277.5 L1194.1 280 L1192.9 282.3 L1195.3 282.5 L1196.5 284.7 L1199.2 284.5 L1200.1 287.1 L1200.2 289.7 L1198.9 291.9 L1195.3 293.2 L1193.4 292.1 L1191.7 290.7 L1189.2 287.7 L1186.6 286.2 L1184.4 288.3 L1185.8 290.7 L1187.9 291.3 L1190.4 290.7 L1190 294 L1192.9 295.6 L1193.4 298.7 L1196.5 299.2 L1197.3 301.3 L1198.9 302.8 L1201.4 302.6 L1202.5 300.4 L1205.3 302 L1204.9 305.2 L1206.2 307.5 L1208.5 308.8 L1209.9 310.4 L1212.2 310.6 L1213.4 312.4 L1215.3 313.5 L1216.7 315.7 L1219.4 314.9 L1221.3 316.6 L1223 318.5 L1224.3 320.2 L1226.7 320.2 L1227.8 322.1 L1229 324.4 L1229 326.9 L1229.8 329.8 L1232.7 330.5 L1235.3 329 L1237.5 331.1 L1237.4 333.9 L1235.1 335.4 L1236.4 337.7 L1238.7 339 L1239.5 340.9 L1241.5 342.5 L1240.5 345 L1239 347.2 L1238.7 349.8 L1240.4 352 L1241.1 354.7 L1239.1 355.6 L1237.5 357.1 L1238.6 359 L1239 361.1 L1239.9 363.1 L1236.3 361.9 L1234.9 360.1 L1232.8 359 L1231.5 357.1 L1228.9 357.7 L1227 356.6 L1225.4 354.7 L1224 352.4 L1221.5 352.9 L1219.4 352.2 L1216.6 352.4 L1216.1 348.6 L1213.4 348.6 L1210.8 348.3 L1208.5 347.6 L1207.3 345 L1205.6 343.7 L1203.7 342.6 L1205.8 344.6 L1206.1 347.4 L1204.1 346.7 L1202.2 345.6 L1200.1 345 L1197.5 345.8 L1195.3 344.4 L1196.9 346.7 L1198.9 348.6 L1201.6 349.1 L1202.1 351.9 L1203.7 353.5 L1205.5 355.3 L1208.8 355.4 L1209.7 358.3 L1212 359.6 L1214.8 360.2 L1215.8 363.1 L1217.9 364.1 L1219 366.8 L1221.8 366.7 L1223.7 368.3 L1225.3 370.2 L1227.8 370.9 L1228.8 373.1 L1232.1 372.6 L1232.7 375.2 L1233.1 378.4 L1236.3 378.8 L1236.3 376.4 L1233.2 375.3 L1233.9 372.7"/>
<path stroke-width="3" d="M185.3 363.6 L188.6 363.3 L191.5 364.6 L194.5 363.8 L197.7 363.6 L200.9 364.2 L203.8 365.7 L207.3 365.9 L210 363.6 L212.5 366.2 L216.1 365.7 L219 363.9 L222.3 364.6 M296.2 374.9 L299.6 374.8 L302.3 372.8 L306.3 374.5 L310.5 373.5 L315 373.1 L318.8 370.8 M109.4 365.7 L112.6 363.7 L116.1 363.4 L119.7 363.6 L124 364.6 L127.9 366.7 L130.9 365.8 L133.9 364.6 L137.3 366.9 L140.2 365.3 M382.4 324.6 L381.7 328.3 L384.4 330.8 L383.5 333.9 L382.4 336.9 M390.6 321.5 L393.3 322.9 L396.7 322.9 L398.8 325.6 L402.3 325.3 L405.1 327.2 L408 328.7 M488.9 406.7 L491.2 407.5 L492.1 409.6 L494.8 410.1 L495 412.9 L494.3 415 L494.1 417.5 L492 419 L491.4 422.1 L492.6 423.7 L495.6 423.8 L497.1 425.2 L499.3 426.6 L497 430.4 L501.1 430.9 L501.2 433.4 L502.9 435.1 L505.6 436.3 L504.8 439.3 L505.3 441.6 L505 443.7 L504.5 445.7 L505.6 448.1 L503.6 449.8 L503.3 451.9 L506.7 452.5 L506.9 455.3 L508.9 456.9 L508.4 460.1 L508.4 462.2 L509.7 464.8 L509.3 466.8 L506.3 468.3 L508.6 469.1 L510.4 470.4 L510.6 473.2 L512.5 474.4 M511.5 427.2 L511.7 429.3 L511 431.6 L511.9 433.6 L512 435.7 L513.5 437.5 L511 439 L512.8 441.8 L512.5 443.9 L508.6 445 L510.4 447.8 L513.1 449 L511.4 452.4 L512.9 454.2 L514.5 456 L516.6 458.3 L512.3 459.9 L511.8 461.9 L513.5 464.2 M506.3 486.8 L506.5 489 L506.7 491.3 L507.1 493.5 L509.4 495 L512.1 493.9 L513.5 496.4 L515.6 497 L517.1 495.5 L519.9 495.2 L521.3 493.5 L521.7 490.9 L523.2 493.2 L525.7 492.6 L527.9 492.9 L527.1 495.9 L529.1 497.4 L531 499.1 M952.5 365.7 L955.3 367.3 L958.2 368.7 L960.7 370.8 L964.7 372.8 L968.9 374.3 M952.5 404.7 L955.2 402 L956.2 398.2 L958 395 L960.7 392.3 M1315.6 222 L1317 223.9 L1316.7 226 L1315 228.3 L1316.6 230.2 L1319.5 229.7 L1318.6 234.4 L1320.5 235.3 L1323.1 235.2 L1324.8 236.4 L1326.9 238.4 L1321.4 240.5 L1326.2 242.5 L1322.5 244.6 L1324.8 246.6 L1327.4 248 L1328.2 250 L1325.4 253.4 L1327.9 254.8 L1330.5 255.2 L1329 260.2 L1332.8 259.1 L1335.9 258.9 L1336.1 262 L1338.9 261.7 L1339.7 264 L1340.3 266.7 L1340.7 269.5 L1344.3 268.2 L1347.7 268.6 L1347.4 271.4 L1349.7 272.6 L1346.4 277.5 L1350.5 277.4 L1353.9 278.1 L1355.7 279.9 L1356.9 281.9 L1356 285.2 L1356.6 287.7 L1355.7 291.2 L1357.2 292.8 L1359.4 293.9 L1359.3 296.8 L1361 298.2 L1364.8 297.9 L1367 298.8 L1369.1 299.9 L1366 304.7 L1368.3 305.6 L1371 306.1 L1374.6 304.7 L1373.6 309.6 L1376.4 309.1 L1378.1 310.3 L1379.2 312.3 L1381.4 313.2 L1383.6 314.2 L1385.8 315.1 L1385.4 317.9 L1385.3 320.5 L1387.7 321.1 L1386.5 325.9 L1392.1 322.8 L1389.7 328.8 L1393.6 327.7 L1396.6 327.5 L1397.5 329.8 L1397 333.7 L1398.6 335.2 L1401.8 334.9 L1403.7 335.9 L1407.2 335.3 L1406.8 339 L1408.9 339.9 L1410 342.1 L1409.6 345.8 L1414.7 343.3 L1415.5 345.6 L1414.7 350 L1418.2 349.2 L1418.7 345.2 L1422 346.6 L1424.3 346.2 L1427.4 347.1 L1429.3 345.8 L1430.5 343.1 L1429.1 339.2 L1430.5 337.1 L1434.6 336.9 L1434.3 333.1 L1439.9 336.6 L1439.7 332.8 L1442.4 333.6 L1440.9 337.5 L1441.2 339.9 L1444.9 340 L1447.6 340.4 L1449.9 341.4 L1451 344.1 L1449.2 347.6 L1452.3 348.2 L1455.6 348.8 L1453.8 352.3 L1456.2 353.3 L1456.6 350.1 L1459.2 348.2 L1460.6 345.7 L1461.7 343 L1465.4 345.1 L1467.8 347 L1470.2 348.1 L1472.6 345.1 L1473.3 343 L1475.3 340.7 L1468.5 339.3 L1469.8 337.1 L1471.5 334.9 L1471 332.9 L1474 330.1 L1473.5 328.1 L1469.1 326.8 L1469.5 324.6 L1467.5 322.7 L1468.6 320.6 L1468.8 318.5 L1471.7 316.1 L1468.5 314.4 L1466 312.5 L1470.2 310 L1469.6 308 L1470 305.9 L1467.4 304.1 L1468.2 301.2 L1466.1 299.6 L1463.3 298.5 L1463.3 295.9 L1460.6 295.6 L1458.7 294 L1457.2 291.8 L1459.7 290.2 L1455.3 286.9 L1456.6 285.1 L1459.2 283.6 L1461.7 282.2 L1459.2 278.8 L1458.8 276.2 L1459.4 274.1 L1463.3 273.3 L1464.3 271.4 L1463.4 268.8 L1468.5 268.1 L1468.4 265.9 L1466.4 263 L1468.5 259.4 L1462.9 259.7 L1460.7 258.2 L1462.3 254.8 L1459 253.5 L1461.3 250.7 L1462.2 248.3 L1460.3 246.6 L1458.7 245.2 L1456.3 244.5 L1456.1 242.1 L1456 239.5 L1454.1 238.4 L1453.6 235.6 L1451 234.3 L1454.1 234.4 L1456.5 233.7 L1457.2 230.2 L1458.6 228.3 L1455 225.8 L1460.4 224.4 L1458.2 222.0 M1327.9 234.3 L1330.8 235.3 L1333 237.4 L1329.8 239.1 L1328.2 241.2 L1331 244.6 L1332.7 246.3 L1334.7 247.8 L1332 251.4 L1336.4 252 L1338.5 253.5 L1336.1 256.9 L1335.4 260.6 L1339.6 260.1 L1339 263.8 L1342.3 264.1 L1344 265.5 L1342.4 269.3 L1346.2 269.5 L1349.2 270.1 L1348.4 273.3 L1352.4 272.9 L1350.6 276.8 L1351.3 278.8 L1351 281.6 L1354.6 281.5 L1358.3 282 L1356.3 286.1 L1359.1 287.2 L1359.5 289.7 L1360.7 291.8 M1393.6 325.6 L1397 324.3 L1399 326.3 L1400.7 328.7 L1402.1 330.7 L1401.2 334.3 L1407.3 332.5 L1406.5 336.1 L1407.9 338 L1408.1 341 L1409 343.4 L1414.3 340.6 L1416.3 341.7 L1416.1 345.1 M1436.7 333.9 L1437.3 337.7 L1439.2 339 L1442.8 336.9 L1444.2 338.4 L1447.9 338 L1444.3 343.5 L1447.9 343.1 L1450.4 343.8 L1450.4 348.2 L1454.1 347.2 L1455.3 349.2 L1456.1 351.8 L1459.2 351.3 M1461.3 310.3 L1464.5 311.2 L1461.5 315.3 L1466.2 315.5 L1465.4 318.5 L1465.7 320.6 L1462.1 322.1 L1461.8 324.2 L1466 327.1 L1463.3 328.7 L1466.3 329.7 L1466.5 332.4 L1467.1 334.9 L1468.5 336.9 L1468.2 339.4 L1468.8 342.2 L1465.4 343.1 M1254 408.8 L1255.7 410.1 L1256 412.4 L1258.1 413.4 L1258 416 L1260.2 417 L1261.7 418.4 L1263 420 L1266.6 419.8 L1264.4 424.1 L1266.3 425.2 L1268 426.8 L1270.9 427.1 L1269.9 431.4 L1271.5 433.2 L1274.5 433.4 L1276 434.9 L1278.8 435.3 L1278.4 438.2 L1281.7 438.3 L1280.7 441.6 L1284.1 441.6 L1283.5 444.6 L1286.7 444.8 L1285.9 447.9 L1286.8 449.8 L1288 451.5 L1291.9 451.1 L1289.7 455.3 L1294.2 454.6 L1293 458 L1293.4 460.8 L1294.9 462.7 L1297.9 463 L1301.8 462.3 L1301.2 466.2 L1302.2 468.3 L1304 469.9 L1304.3 472.4 L1300.4 473 L1304.6 477.7 L1301.2 478.5 L1300 475.4 L1298.2 473.8 L1295 476.5 L1294.9 479.1 L1295.7 481.1 L1300.5 480.1 L1297.2 485.1 L1301.2 484.7 L1303.3 485.7 L1303.8 489.7 L1306 490.5 L1309.4 488.8 L1312.5 487.7 L1312.6 492.7 L1314.2 494.7 L1317.6 492.9 L1321.5 492.1 L1321.9 495.2 L1321.8 498.9 L1324.8 499.1 L1327.5 497.1 L1328.8 502.7 L1331.9 498.7 L1333.4 502.9 L1336.1 501.1 L1338.4 498.8 L1340.2 501.5 L1341.9 504.7 L1344.5 499.8 L1346.4 502.1 L1348.4 500.4 L1350.5 502.2 L1352.5 500.8 L1354.6 498.8 L1356.6 499.9 L1358.7 502.1 L1362.2 502.7 L1361.7 506.2 L1358.1 505 L1357.4 507.8 L1354.7 507.8 L1354.6 511.4 L1353.8 514.7 L1349.4 512.2 L1349.9 517.6 L1346.4 516.5 L1344.2 517.7 L1341.7 518.5 L1340.8 521.5 L1338.1 522.1 M1356.6 509.3 L1357.5 512.8 L1360.5 511.7 L1362.5 512.9 L1364.8 513.4 L1365.6 516.9 L1370.2 512.9 L1369.4 519.7 L1373 517.5 L1375 518.7 L1377.2 517.3 L1378.9 520.4 L1381.2 518.6 L1384.4 519 L1385.3 522.1 M1268.4 433.4 L1267 437.3 L1270.7 437.2 L1273.3 437.9 L1272.4 441.4 L1275.5 441.7 L1276.6 443.7 L1279.6 444.8 L1276.6 448.4 L1282.1 448.6 L1277.7 452.7 L1280.7 453.9 M498.1 522 L499.4 525 L500.2 528.2 L501.6 531.3 L503.3 534.3 L503.8 538.5 L505.3 542.5 L506.8 546.1 L508.4 549.7 L510.3 552.4 L512.5 554.8 L513.5 552.8 L511.8 548.7 L510.4 544.6 L510.5 540.4 L511.5 536.4 L510 533.4 L509.4 530.2 L510.6 527 L512.5 524.1 L511.5 522.0 M546.4 563 L548.3 564.3 L550.6 564.8 L552.5 566.1 L555.5 565.1 L556.6 562 L557.9 564.1 L560.3 565.5 L560.7 568.2 L558.4 568.3 L555.8 567.6 L555 571.8 L552.5 571.3 L549.9 572.5 L552.5 576.4 L550.5 577.9 L548.4 579.5 L550.3 577.9 L552.7 579.9 L554.6 578.4 M568.9 593.8 L569.1 596.8 L571.3 597.3 L574.1 597 L575.1 599 L574.8 601.8 L578.2 602.2 L579.8 603.8 L578.4 607.4 L581.2 608.2 L581.9 610.6 L582.9 612.8 L584.3 614.8 L584.2 617.6 L587.4 618.5 L588.6 620.4 L588 623.3 L589.6 625 L590 627.4 L592.8 628.6 L593.6 630.8 L592.9 633 L594 634.9 L595.7 636.7 L596.6 638.7 L595.6 641 L595.2 643.1 L598 644.9 L594.3 647.4 L598.1 649.1 L596.6 651.3 L598.2 654 L597.2 655.9 L592.8 656.9 L594.9 659.7 L593.6 661.6 L593.6 664.2 L592.7 666.1 L591.4 667.6 L588.4 667.7 M1005.9 682.1 L1008.1 679.6 L1010.8 677.4 L1013.1 674.9 L1016.4 672.2 L1020.2 670.2 M1006.9 690.3 L1009.6 688.3 L1012.5 686.7 L1015.1 684.5 M1054.1 737.5 L1057.2 739.5 L1056.2 744.7 M1228.6 655.4 L1232.2 655.7 L1235.7 656.4 L1239.4 656.6 L1242.9 657.5 M1334 538.4 L1335.4 535.5 L1336.1 532.3 L1338.9 529.8 L1342.3 528.2 M1364.8 522 L1368.9 525.1 L1373.3 525.1 L1377.1 523 L1381.2 522.1 L1385.3 522 L1387 525 L1388.4 528.2 L1386.8 531.2 L1385.3 534.3 L1382.3 539.4 L1386 539.7 L1389.5 538.4 L1393.6 542.5 L1394.4 545.6 L1393.6 548.7 M1364.8 665.7 L1367.6 667.5 L1370 669.8 L1366.9 674.9 M1316.6 684.1 L1317.6 687.1 L1318.5 690 L1320.7 692.3 M1288.9 710.8 L1287 711.9 L1284.3 712.3 L1283.1 714.1 L1282.1 716.3 L1280.7 718 L1279.5 719.8 L1277.6 720.7 L1274.8 720.5 L1274.4 723.3 L1272.5 724.2 L1270.3 725.1 L1268.8 726.9 L1266.3 727.6 L1264.8 729.4 L1264.5 732.5 L1262.2 733.4 M1254 766.2 L1259.1 767.3 L1262.6 768.1 L1264.3 771.4 L1265.3 776.5 L1263.2 781.6 L1258.1 782.6 L1254 783.7 M558.7 830.2 L560.3 833.2 L561.7 836.4 M584.3 918.5 L585.3 921.5 M598.7 919.5 L600.7 920.5 M895 1058 L895.2 1054.5 L895.7 1051 L897.1 1047.8 L899.2 1045.3 L900.6 1042.3 L902.2 1039.5 L904.3 1036.8 L907 1034.7 L909.4 1032.4 L913.7 1031.4 L917.6 1029.3 L921.2 1028.7 L924.8 1028.9 M897.1 1060.1 L898.5 1064.2 L900.2 1068.3 L900.3 1071.4 L899.9 1074.5 L899.2 1077.5 M975.1 1011.8 L978.1 1012.7 L981.2 1012.9 M1118.8 1033.4 L1121.8 1037.5 M1125.9 1048.8 L1128.3 1052.5 L1131.1 1056.0 M1145.4 1019 L1149.5 1022.1 M1044.9 996.4 L1048.4 995.9 L1052 995.7 L1055.6 995.6 L1059.2 996 L1063.3 996.6 L1067.4 996.9 M1182.4 830.2 L1185.1 828.2 L1187.7 825.9 L1190.6 824.1 L1194.7 822.0 M1175.2 842.5 L1180.3 845.6 L1183.1 842.7 L1186.5 840.5 L1188.7 837.5 L1190.6 834.3 L1191.9 831.3 L1192.6 828.2 M1184.4 850.7 L1187.8 848 L1190.6 844.6 L1194.7 848.7 L1193.2 851.4 L1192.3 854.3 L1190.6 856.9 L1187.9 860.4 L1184.4 863 L1187.3 865.9 L1190.6 868.2 L1193.6 865.5 L1196.7 863 L1199.1 860.1 L1200.8 856.9 L1201.3 852.6 L1202.9 848.7 L1202.3 844.5 L1200.8 840.5 L1199.6 836.4 L1198.8 832.3 L1198.2 829 L1196.7 826.1 M1188.5 881.5 L1191.4 883.6 L1194.7 884.6 L1197.8 883 L1200.8 881.5 L1204.9 885.6 L1203.4 888.5 L1202.9 891.8 L1199.9 892.6 L1196.7 892.8 L1192.6 889.7 L1192 892.9 L1190.6 895.9 L1189.1 898.8 L1188.5 902 L1191.7 902.9 L1194.7 904.1 L1198.8 900.0 M1190.6 1076.5 L1192.2 1079.9 L1194.7 1082.6 L1196.9 1085.6 L1198.8 1088.8 L1200.6 1092 L1202.9 1095 L1204.9 1090.9 L1202.8 1087.9 L1200.8 1084.7 L1199.1 1081.4 L1196.7 1078.5 L1194.7 1073.4 L1190.6 1076.5 M1202.9 1073.4 L1207 1072.4 M1133.1 1088.8 L1133.1 1091.3 M1108.5 1122.1 L1111.6 1119.8 L1114.6 1117.5 L1118.1 1116.6 L1121.3 1114.8 L1124.9 1114.5 L1128.1 1114.6 L1131 1113 L1134.1 1112.5 L1137.2 1112.4 L1140.2 1111.5 L1143.3 1111.3 L1146.5 1111.8 L1149.5 1111 L1152.6 1110.2 L1155.7 1110.1 L1158.8 1110.8 L1161.9 1110.4 L1166 1110.7 L1170.1 1111.8 L1173.5 1113.1 L1176.2 1115.5 L1179.2 1117.1 L1182.4 1118.6 L1185.8 1118.3 L1189.2 1117.9 L1192.6 1117.5 L1196.7 1118.8 L1200.8 1119.6 L1204.9 1122.1 M1288.9 1117.5 L1295 1112.4 L1303.3 1115.5 L1305.3 1119.6 M1264.3 1098.7 L1265.1 1099.5 M1309.4 1119.6 L1310.2 1118.8 M1316.6 1118.8 L1317.4 1118.4 M680.4 1172.7 L681.4 1172.7 M983.3 1199 L986.5 1199.7 L989.5 1201 L992.6 1198.5 L995.6 1195.9 M1112.6 1244.1 L1115.3 1245.5 L1118.2 1246.6 L1120.8 1248.2 L1124.2 1250.3 L1128 1251.3 M1153.6 1350.8 L1156.9 1353 L1159.8 1355.6 M893 1146.6 L894.2 1149.9 L896.1 1152.8 M934 1240.6 L937.2 1240.2 L940.2 1239.4 L943.8 1240.4 L947.4 1241.4 M1114.2 1212.7 L1115.5 1212.7 M1139.3 1263.2 L1140.3 1265.7 M1162.9 1279 L1165.5 1279.0 M1158.6 1294.8 L1159.4 1294.8 M1342.3 1150.7 L1344.8 1152.4 L1347.6 1153.5 L1350.5 1154.4 M1284.8 1147.7 L1288.4 1147.7 L1292 1148.3 M1300.8 1123 L1302 1123.0 M1409 1153.8 L1413.1 1154.8 M1371.4 1164.7 L1374.1 1164.7 M1376.5 1158.9 L1377.3 1158.9 M1425.4 1142.5 L1428 1142.5 M1421.3 1160 L1425.4 1159.4 M1451.6 1151.8 L1452.7 1152.4 M1478.7 1171.3 L1481.1 1173.3 L1482.8 1175.8 M1484.5 1177.4 L1485.9 1177.8 M1499.3 1227.7 L1500.3 1231.8 M1370 1266.7 L1375.1 1268.7 L1378.2 1270.8 M1396.2 1266.7 L1397 1269.4 M1422.7 1264.6 L1423.3 1267.7 M1445.9 1258.7 L1450 1259.1 M1485.9 1272.8 L1489.3 1275.1 L1492.1 1278 L1496 1280 L1500.3 1281.1 M1479.8 1283.1 L1483.9 1283.4 L1488 1283.1 M1571.1 1314.9 L1571 1318.7 L1572 1322.4 L1571.7 1326.2 M1635.7 1317 L1637.8 1319.0 M921.9 289.5 L923.9 292.4 L926.7 294.4 L929.1 299.2 M1380 538.8 L1383.4 538.5 L1386.7 539.6 M1153.1 341.4 L1155.4 342 L1155.8 344.4 L1158.8 344.3 L1157.7 348.4 L1160.3 348.6 L1161.7 350.6 L1163.6 352 L1164.6 354.5 L1167.5 354.7 M1230.2 258.2 L1232.7 259.2 L1232.7 261.8"/>
<path stroke-width="4" d="M504.3 530.2 L505.2 533.7 L506.4 537 L507.4 540.5 M1184.4 834.3 L1187.1 837.8 L1190.6 840.5 L1189.1 844.6 L1187.5 848.7 L1190.6 851.3 L1192.6 854.8 M1198.8 875.4 L1200.6 877.9 L1201.7 880.8 L1202.9 883.6 L1203.3 886.7 L1203.9 889.7 M1275.5 1106.9 L1283.8 1108.5 M614.3 1180.5 L615.1 1183.6 M1190.6 1122 L1194.7 1123 L1198.8 1124.1 L1201.7 1125.1 L1204.4 1126.4 L1207 1128.2 L1211.1 1129.8 L1215.2 1131.2 L1217.9 1132.7 L1220.8 1133.8 L1223.4 1135.3 L1227.4 1136.9 L1231.6 1137.4 L1234.3 1138.9 L1237.3 1139.6 L1239.8 1141.5 L1244 1141.9 L1248 1142.5 L1251.1 1142.4 L1254 1141.5 M865.2 222 L868.8 224.4 L873.7 223.2 L877.3 222.8 L880.9 223.8 L881.5 222.0 M745.8 222.6 L749.3 224 L753.1 223.4 M825.4 253.4 L828.4 257 L829 260.6 M1384 528.9 L1386.7 532.4 L1389.3 536 L1392 538.7 L1393.3 542.2 L1392.9 546.7 M1221.8 293.2 L1222.2 296.1 L1224.6 297.5 L1226.6 299.2 L1227.3 301.6 L1229.7 301.8 L1231.5 302.8 L1232.8 305.2 L1234.9 305.8 L1237.5 305.2 M1206.1 308.8 L1208.7 308.9 L1209.2 312.1 L1211.9 311.9 L1213.4 313.7 L1214.7 315.5 L1216.7 316.1 L1218.2 317.5 L1220.6 317.3"/>
<path stroke-width="5" d="M1167.5 225 L1169.6 227.4 L1172.5 225.3 L1175.1 224.4 L1177.2 226.8 L1177.5 230.3 L1180.6 229.6 L1181.7 231.8 L1184.4 231.6 L1187.2 230.6 L1187.3 234.9 L1191 232 L1191.7 235.3 L1194.5 235.1 L1196.3 237 L1199.4 236.4 L1200.1 240.1 L1202 241.5 L1205 240.3 L1206.9 241.7 L1208.5 243.7 L1210.6 245.7 L1213.5 244.9 L1215.8 246.1"/>
<path fill="#00d000" stroke-width="1.5" d="M1028.4 288.7 L1034.6 289.7 L1040.8 292.8 L1041.8 300 L1037.7 304.1 L1034.6 297.9 L1030.5 293.8 L1027.4 292.8Z M1103.4 524.1 L1108.5 522 L1113.6 524.1 L1111.6 528.2 L1105.4 529.2Z M1071.5 715.9 L1078.7 714.9 L1079.8 722.1 L1073.6 721.1Z M574.1 904.1 L579.2 905.1 L587.4 906.1 L583.3 907.8 L577.1 907.8Z M1011 1005.7 L1016.1 1002.6 L1020.2 1004.7 L1018.2 1009.8 L1015.1 1012.9 L1012 1008.8Z M1365.9 918.5 L1370 916 L1370 920.1Z M1256.1 1103.2 L1260.2 1109.3 L1265.3 1106.2 L1258.1 1114.5Z M749.5 1138.4 L752.6 1139.4 L755.7 1143.5 L757.7 1148.7 L755.7 1147.7 L751.6 1144.6Z M674.6 1183 L678.1 1180.1 L677.3 1184.0Z M1249.1 1350.8 L1254 1352.9 L1254 1358 L1251.1 1356.0Z M1152.6 1177 L1157.1 1176.2 L1154.9 1179.5Z M1443.8 1146.2 L1450 1144.6 L1448.6 1149.1Z M1468.5 1150.3 L1472 1151.1 L1471.1 1153.8Z M1452.1 1158.5 L1459.2 1161.4 L1456.2 1162.6Z M1470.5 1159.4 L1475.7 1158.9 L1473.6 1162.0Z M1465.8 1166.3 L1469.9 1168 L1468.5 1170.0Z M1490 1194.9 L1497.2 1193.8 L1499.9 1200.4 L1495.1 1201.6Z M1496.8 1220.5 L1499.7 1219.3 L1499.7 1225.0Z M1493.7 1243.5 L1497.4 1236.9 L1498.6 1242.3 L1495.4 1246.4Z M1521.8 1214.4 L1527.4 1215.4 L1527.4 1220.1Z M1512.2 1255 L1518.1 1250.1 L1516.1 1254.6Z M1354.2 1264.2 L1359.1 1265.5 L1356.6 1268.1Z M1381.7 1264.2 L1387.8 1265.7 L1387.4 1269.2Z M1407.5 1266.5 L1415.5 1266.5 L1412 1269.8Z M1437.7 1276.3 L1441.8 1276.3 L1441.8 1279.6 L1437.7 1279.6Z M1459.2 1269.8 L1463.3 1266.7 L1465.4 1274.9 L1468.5 1278 L1463.3 1281.1 L1459.2 1274.9 L1455.1 1272.8Z M1518.8 1288.2 L1523.9 1286.2 L1528 1296.4 L1522.9 1300.6 L1517.7 1304.7 L1510.5 1303.6 L1517.7 1300.6Z M812.2 283.5 L819.4 284.7 L820 293.2 L814.6 294.4 L812.2 289.5Z M802.5 272.7 L807.3 275.1 L808.5 278.7 L804.9 278.1Z M941.2 231.6 L948.4 230.4 L949 235.3 L942.4 237.7Z M907.4 254 L914.1 255.2 L912.3 258.2 L908.6 258.2Z M918.3 260.6 L923.1 261.2 L923.7 267.8 L920.1 268.4Z M1392.9 554.7 L1399.6 552.9 L1399.1 560 L1395.6 562.7Z M1409.8 590.2 L1416.9 591.1 L1416 598.2 L1412.4 595.6Z M1433.8 600 L1440 600.9 L1441.8 608.9 L1438.2 612.4 L1435.6 607.1Z M1408 625.8 L1415.1 624 L1422.2 626.7 L1421.3 629.3 L1413.3 631.1Z M1380.4 575.1 L1384.9 574.2 L1384 577.8 L1381.3 577.8Z M1363.6 522.2 L1368.9 520.9 L1369.3 525.3 L1365.3 525.3Z M1360 578.7 L1363.6 577.8 L1363.6 581.3 L1360.9 581.8Z"/>
<rect x="367" y="335" width="958" height="958" stroke="#ffffff" stroke-width="2"/>
</g></g></svg>
<!--MAPEND-->
<!-- animation buttons -->
<svg class="ico" style="left:1400px;top:156px" width="262" height="60" viewBox="1400 156 262 60">
<defs>
<radialGradient id="gInfo" cx="0.45" cy="0.35" r="0.7"><stop offset="0" stop-color="#a9cdf0"/><stop offset="1" stop-color="#3f7cc4"/></radialGradient>
<linearGradient id="gTriL" x1="0" y1="0" x2="1" y2="0"><stop offset="0" stop-color="#b4b4e6"/><stop offset="1" stop-color="#5a5aa6"/></linearGradient>
<linearGradient id="gTriR" x1="0" y1="0" x2="1" y2="0"><stop offset="0" stop-color="#6a6ab4"/><stop offset="0.5" stop-color="#8a8acc"/><stop offset="1" stop-color="#5a5aa6"/></linearGradient>
<g id="abtn"><rect x="1" y="1" width="33" height="33" fill="#3c3f41" stroke="#55595b" stroke-width="2"/><rect x="3" y="3" width="29" height="29" fill="none" stroke="#323436" stroke-width="2"/></g>
<g id="triL"><path d="M0 11 L10 0 V22 Z" fill="url(#gTriL)"/><path d="M0 11 L10 22" stroke="#34347a" stroke-width="1.2"/></g>
<g id="triR"><path d="M0 0 L12 12.500 L0 24.500 Z" fill="url(#gTriR)"/><path d="M0.600 0 V24" stroke="#2e2e78" stroke-width="1.400"/><path d="M1 24.500 L13.500 13.500" stroke="#ffffff" stroke-width="2.600"/></g>
<g id="barR"><rect x="0" y="0" width="6" height="22" fill="#9a9ad6"/><rect x="0" y="0" width="1.500" height="22" fill="#3a3a84"/><path d="M6.500 0 V22.500 M0 22 H7.500" stroke="#ffffff" stroke-width="2"/></g>
</defs>
<g transform="translate(1410,174)"><use href="#abtn"/><use href="#triL" x="5.600" y="7"/><rect x="15.800" y="8" width="2.200" height="22" fill="#fff"/><use href="#triL" x="17.500" y="7"/><rect x="27.600" y="8" width="2.400" height="22" fill="#fff"/></g>
<g transform="translate(1448,174)"><use href="#abtn"/><use href="#triL" x="7.600" y="7"/><rect x="17.800" y="8" width="2.200" height="22" fill="#fff"/><use href="#barR" x="23.500" y="7.500"/></g>
<g transform="translate(1486,174)"><use href="#abtn"/><use href="#triR" x="13" y="5"/></g>
<g transform="translate(1524,174)"><use href="#abtn"/><use href="#barR" x="6.500" y="7.500"/><use href="#triR" x="17" y="6" transform="translate(0,0)"/></g>
<g transform="translate(1562,174)"><use href="#abtn"/><use href="#triR" x="7" y="6"/><use href="#triR" x="19.500" y="6"/></g>
<g transform="translate(1600,174)"><use href="#abtn"/><circle cx="17.300" cy="17.300" r="12.600" fill="url(#gInfo)" stroke="#a5c6ea" stroke-width="1.800"/><text x="17.300" y="25" font-family="Liberation Serif, serif" font-weight="bold" font-size="22" fill="#fff" text-anchor="middle">i</text></g>
<path d="M1656.500 162 V180 L1646 171 Z" fill="#858789"/>
<path d="M1646 190 V208 L1656.500 199 Z" fill="#858789"/>
</svg>
<!-- splitter dots -->
<svg class="ico" style="left:1645px;top:766px" width="12" height="34" viewBox="0 0 12 34"><circle cx="6" cy="7" r="2.700" fill="#d7d7d7"/><circle cx="6" cy="17" r="2.700" fill="#d7d7d7"/><circle cx="6" cy="27" r="2.700" fill="#d7d7d7"/></svg>
<!-- legend panel -->
<div class="abs" style="left:1660px;top:156px;width:2px;height:1254px;background:#68696b"></div>
<div class="abs" style="left:1660px;top:156px;width:492px;height:2px;background:#68696b"></div>
<div class="abs" style="left:1660px;top:1408px;width:492px;height:2px;background:#797b7c"></div>
<div class="abs" style="left:2150px;top:156px;width:2px;height:1254px;background:#797b7c"></div>
<div class="t" id="lg" style="left:1833px;top:162.5px;font-size:31.5px;font-weight:bold;color:#b9b9b9">Legend</div>
<div class="abs" style="left:1664px;top:200px;width:484px;height:1px;background:#232426"></div>
<div class="abs" style="left:1664px;top:201px;width:484px;height:2px;background:#f2f2f2"></div>
<div class="abs" style="left:1664px;top:242px;width:484px;height:1px;background:#232426"></div>
<div class="abs" style="left:1664px;top:243px;width:484px;height:2px;background:#f2f2f2"></div>
<svg class="ico" style="left:1660px;top:160px" width="492" height="140" viewBox="1660 160 492 140">
<defs><linearGradient id="gLock" x1="0" y1="0" x2="0" y2="1"><stop offset="0" stop-color="#f7cf63"/><stop offset="1" stop-color="#e7a827"/></linearGradient></defs>
<!-- undock window icon -->
<rect x="2118.800" y="165.800" width="26.400" height="21.400" fill="#f4f7fd" stroke="#5a8ad4" stroke-width="1.600"/>
<rect x="2119" y="166" width="26" height="4.500" fill="#6f9ee0"/>
<path d="M2140 179 L2146 185.500 H2143 V190 H2137 V185.500 H2134 Z" fill="#4ea64a" stroke="#2f8a2f" stroke-width="0.800"/>
<!-- minus icons -->
<rect x="1671" y="215" width="16" height="16" fill="#fbf3b4" stroke="#0d0d0d" stroke-width="2"/>
<rect x="1674.500" y="222" width="9" height="2.400" fill="#111"/>
<rect x="1677" y="263" width="16" height="16" fill="#fbf3b4" stroke="#0d0d0d" stroke-width="2"/>
<rect x="1680.500" y="270" width="9" height="2.400" fill="#111"/>
<!-- checkboxes -->
<rect x="1703" y="209" width="26" height="26" rx="4" fill="#3e4042" stroke="#5f6163" stroke-width="1.600"/>
<path d="M1709 222 L1714 229 L1723.500 214" fill="none" stroke="#a2a2a2" stroke-width="3.200"/>
<rect x="1709" y="257.500" width="26" height="26" rx="4" fill="#3e4042" stroke="#5f6163" stroke-width="1.600"/>
<path d="M1715 270.500 L1720 277.500 L1729.500 262.500" fill="none" stroke="#a2a2a2" stroke-width="3.200"/>
<!-- lock -->
<path d="M2086 268 V263 Q2086 255 2094 255 Q2102 255 2102 263 V268" fill="none" stroke="#bdbdbd" stroke-width="3"/>
<rect x="2080" y="267" width="28" height="18.500" rx="1.500" fill="url(#gLock)" stroke="#c98a1a" stroke-width="1.200"/>
<rect x="2086" y="271" width="16" height="9" fill="#f9e6a8"/>
<path d="M2094 271 V280 M2086 275.500 H2102" stroke="#d39a2a" stroke-width="1.400"/>
<!-- trash -->
<path d="M2124.500 262 H2143.500 L2142 284 H2126 Z" fill="#dcdcdc" stroke="#9a9a9a" stroke-width="1.200"/>
<path d="M2128.500 266 V281 M2131.500 266 V281 M2134.500 266 V281 M2137.500 266 V281 M2140 266 V281" stroke="#a4a4a4" stroke-width="1.200"/>
<rect x="2123.500" y="258.500" width="21" height="4.500" rx="1.500" fill="#e6e6e6" stroke="#9a9a9a" stroke-width="1"/>
<rect x="2130" y="255.500" width="8" height="3" fill="#cfcfcf" stroke="#9a9a9a" stroke-width="0.800"/>
</svg>
<div class="t" id="mp" style="left:1750px;top:210px;font-size:27px;color:#c2c2c2">Maps</div>
<div class="t" id="dbm" style="left:1749px;top:257.5px;font-size:26.2px;color:#0a60ff;text-decoration:underline;text-decoration-thickness:3px;text-underline-offset:1.6px;text-decoration-skip-ink:none;white-space:pre"> Default Background Maps</div>
<div class="t" id="wc" style="left:1690px;top:300.5px;font-size:20.2px;letter-spacing:0.1px;font-weight:bold;font-family:'DejaVu Sans Condensed','DejaVu Sans',sans-serif;color:#c6c6c6">World Coastlines</div>
<div class="sb" style="left:5px;width:194px"></div>
<div class="sb" style="left:200px;width:1691px"></div>
<div class="sb" style="left:1894px;width:258px;top:1420px"></div>
<div class="t st" id="s1" style="left:28px;letter-spacing:-0.45px">21:51:28 GMT</div>
<div class="t st" id="s2" style="left:208px">Latitude:</div>
<div class="t st" id="s3" style="left:325px">37.3</div>
<div class="t st" id="s4" style="left:400px">Longitude:</div>
<div class="t st" id="s5" style="left:529px">-60.6</div>
<div class="t st" id="s6" style="left:614px">Altitude:</div>
<div class="t st" id="s7" style="left:717px">-5693.0 m</div>
</div>
</body>
</html>
